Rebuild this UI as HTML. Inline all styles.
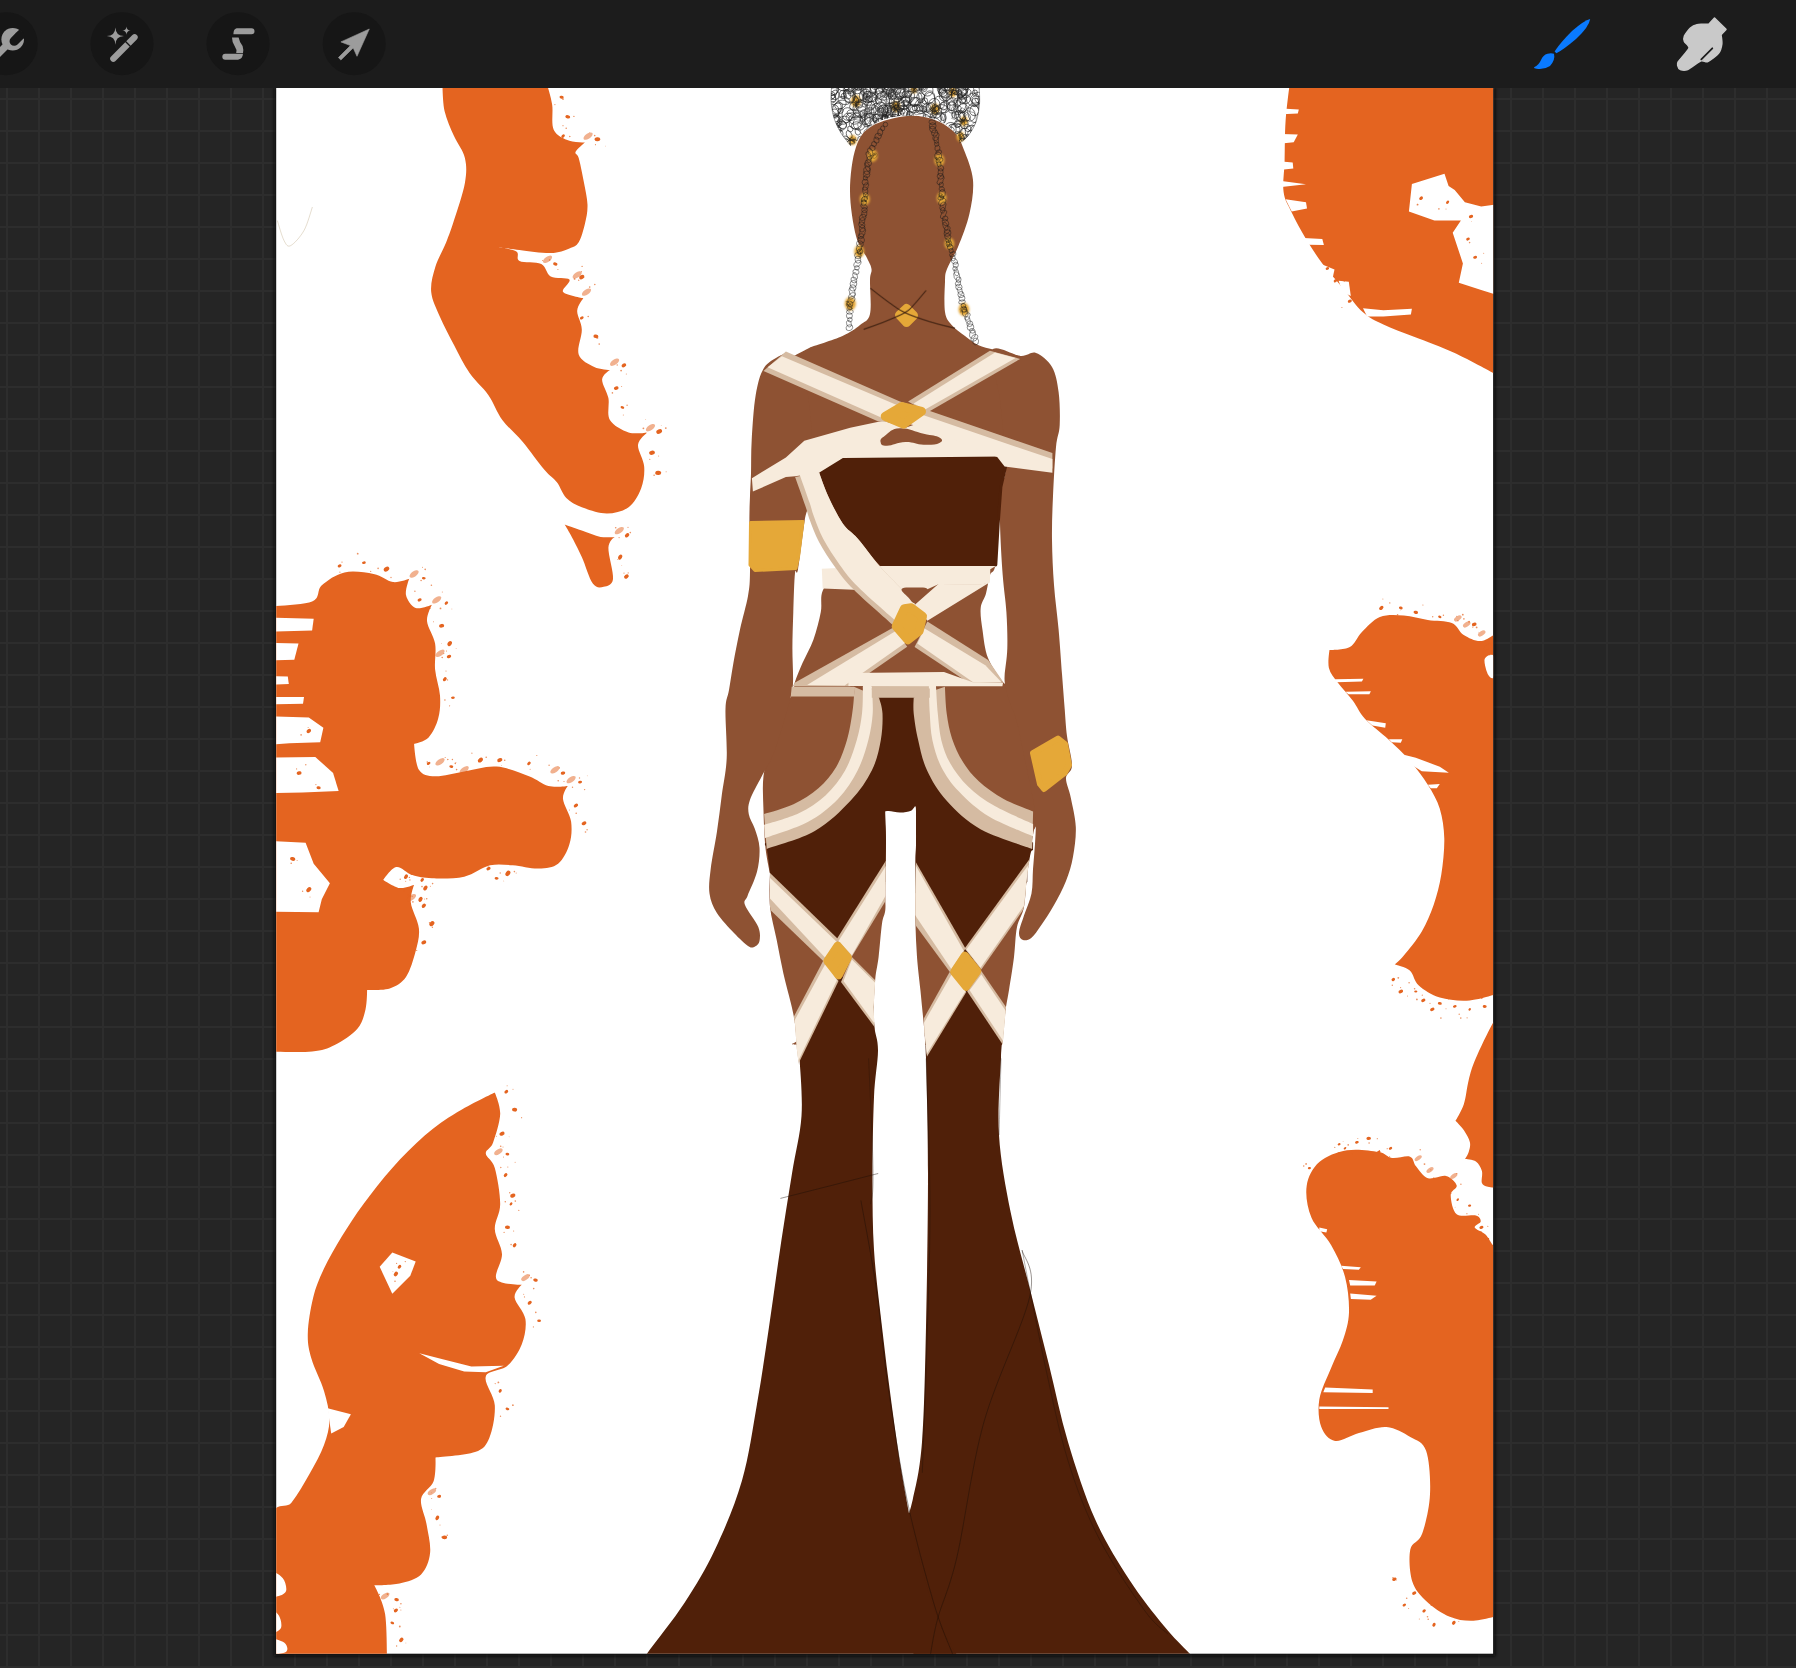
<!DOCTYPE html>
<html><head><meta charset="utf-8"><title>Procreate canvas</title>
<style>
html,body{margin:0;padding:0;background:#252525;overflow:hidden;font-family:"Liberation Sans",sans-serif}
svg{display:block}
</style></head><body>
<svg width="1796" height="1668" viewBox="0 0 1796 1668">
<defs>
<pattern id="grid" x="6" y="98" width="32" height="32" patternUnits="userSpaceOnUse">
<rect width="32" height="32" fill="#252525"/>
<rect x="0" y="0" width="2" height="32" fill="#2d2d2d"/>
<rect x="0" y="0" width="32" height="2" fill="#2d2d2d"/>
</pattern>
<clipPath id="cv"><rect x="276.2" y="88" width="1216.9" height="1565.7"/></clipPath>
<filter id="sh" x="-5%" y="-5%" width="110%" height="110%"><feGaussianBlur stdDeviation="1.8"/></filter>
</defs>
<rect width="1796" height="1668" fill="url(#grid)"/>
<rect x="274" y="88" width="1221.5" height="1568.5" fill="#0c0c0c" opacity="0.8" filter="url(#sh)"/>
<rect x="276.2" y="88" width="1216.9" height="1565.7" fill="#fff"/>
<g clip-path="url(#cv)">
<g id="orange"><path d="M442.5 86.2C442.5 86.2 442.7 102.9 444.6 111.2C446.6 119.5 450.6 128.3 454 136.1C457.4 143.9 463.1 150.2 464.9 158C466.7 165.8 466.7 172.5 464.9 182.9C463.1 193.3 457.1 210.5 454 220.3C450.9 230.2 449.3 234.4 446.2 242.2C443.1 250 437.8 258.8 435.3 267.1C432.8 275.4 430.4 283.7 431.2 292.1C432 300.4 436.2 308.2 440 317C443.8 325.8 449.1 335.7 454 345.1C458.9 354.4 463.9 364.8 469.6 373.1C475.3 381.5 482.8 387.2 488.3 395C493.8 402.8 496.6 412.1 502.3 419.9C508 427.7 515.6 433.4 522.6 441.7C529.6 450.1 538.7 463.1 544.4 469.8C550.1 476.6 553.3 477.6 556.9 482.3C560.5 487 562.1 493.7 566.3 497.9C570.4 502 575.1 504.6 581.8 507.2C588.6 509.8 599 513.5 606.8 513.5C614.6 513.5 622.9 511.4 628.6 507.2C634.3 503.1 638.5 495.3 641.1 488.5C643.7 481.8 644.7 474 644.2 466.7C643.7 459.4 637.5 450.6 638 444.9C638.5 439.1 647.3 432.4 647.3 432.4C647.3 432.4 634.9 434.5 628.6 432.4C622.4 430.3 613.3 425.6 609.9 419.9C606.5 414.2 609.7 404.8 608.4 398.1C607.1 391.3 601.9 384.1 602.1 379.4C602.4 374.7 609.9 370 609.9 370C609.9 370 599.5 369.5 594.3 366.9C589.1 364.3 580.8 360.7 578.7 354.4C576.6 348.2 582.1 336.8 581.8 329.5C581.6 322.2 576.9 316 577.2 310.8C577.4 305.6 583.4 298.3 583.4 298.3C583.4 298.3 565.5 295.2 563.1 292.1C560.8 288.9 571.5 282.2 569.4 279.6C567.3 277 555.3 279.1 550.7 276.5C546 273.9 546.5 266.6 541.3 264C536.1 261.4 523.6 263 519.5 260.9C515.3 258.8 520 253.9 516.4 251.5C512.7 249.2 497.6 246.8 497.6 246.8C497.6 246.8 510.6 248.9 519.5 250C528.3 251 542.3 253.3 550.7 253.1C559 252.8 564.7 250.2 569.4 248.4C574.1 246.6 576.1 246.3 578.7 242.2C581.3 238 583.5 229.7 585 223.4C586.4 217.2 587.7 212 587.5 204.7C587.2 197.5 584.9 187.6 583.4 179.8C582 172 580 162.6 578.7 158C577.4 153.3 574.6 154.3 575.6 151.7C576.6 149.1 585 142.4 585 142.4C585 142.4 574.6 142.9 569.4 140.8C564.2 138.7 556.6 135.9 553.8 129.9C550.9 123.9 553.3 112.2 552.2 104.9C551.2 97.7 547.5 86.2 547.5 86.2C547.5 86.2 442.5 86.2 442.5 86.2Z" fill="#E46420"/><path d="M564.7 524.4C564.7 524.4 575.9 528.5 581.8 530.6C587.8 532.7 595.1 535.8 600.6 536.9C606 537.9 614.6 536.9 614.6 536.9C614.6 536.9 608.6 540.8 608.4 547.8C608.1 554.8 613.8 572.5 613 579C612.3 585.5 607.1 586 603.7 586.8C600.3 587.5 596.4 588.6 592.8 583.6C589.1 578.7 585.5 565.2 581.8 557.1C578.2 549.1 573.8 540.8 570.9 535.3C568.1 529.8 564.7 524.4 564.7 524.4Z" fill="#E46420"/><path d="M270 606.4C270 606.4 303.5 605 312.1 601.5C320.7 598 316.4 590.2 321.8 585.3C327.2 580.5 335.8 574.3 344.5 572.4C353.1 570.5 365.5 572.4 373.6 574C381.7 575.6 387.1 581.3 393 582.1C399 582.9 409.2 578.8 409.2 578.8C409.2 578.8 404.9 590.2 406 595C407 599.9 411.4 606.4 415.7 608C420 609.6 431.9 604.7 431.9 604.7C431.9 604.7 426.5 614.5 427 620.9C427.5 627.4 433.8 635.5 435.1 643.6C436.5 651.7 434.3 660.9 435.1 669.5C435.9 678.1 439.4 687.3 440 695.4C440.5 703.5 440.2 711 438.3 718.1C436.5 725.1 432.7 733.2 428.6 737.5C424.6 741.8 414.1 743.9 414.1 743.9C414.1 743.9 415.4 764.5 418.9 769.8C422.4 775.2 427.5 776.1 435.1 776.3C442.7 776.6 454 773.1 464.2 771.5C474.5 769.8 485.8 765.8 496.6 766.6C507.4 767.4 520.4 773.1 529 776.3C537.6 779.6 541.9 784.4 548.4 786C554.9 787.7 567.8 786 567.8 786C567.8 786 562.4 793 563 799C563.5 804.9 570 814.1 571.1 821.6C572.1 829.2 571.6 837.3 569.4 844.3C567.3 851.3 563.2 859.7 558.1 863.7C553 867.8 546.2 868.3 538.7 868.6C531.1 868.9 520.9 865.9 512.8 865.3C504.7 864.8 498.2 863.5 490.1 865.3C482 867.2 473.9 874.5 464.2 876.7C454.5 878.8 440.5 878.6 431.9 878.3C423.2 878 418.4 876.9 412.4 875.1C406.5 873.2 401.1 866.2 396.3 867C391.4 867.8 383.3 879.9 383.3 879.9C383.3 879.9 394.4 887.2 399.5 888C404.6 888.8 414.1 884.8 414.1 884.8C414.1 884.8 410 895.3 410.8 902.6C411.6 909.9 418.1 920.4 418.9 928.5C419.7 936.6 417.8 943 415.7 951.1C413.5 959.2 410.3 970.8 406 977C401.6 983.2 396.3 986.2 389.8 988.4C383.3 990.5 367.1 990 367.1 990C367.1 990 367.1 1002.9 365.5 1009.4C363.9 1015.9 362.5 1022.9 357.4 1028.8C352.3 1034.8 342.3 1041.2 334.7 1045C327.2 1048.8 322.9 1050.4 312.1 1051.5C301.3 1052.6 270 1051.5 270 1051.5C270 1051.5 270 606.4 270 606.4Z" fill="#E46420"/><path d="M270 617.7L313.7 618.7L312.1 630.6L270 631.6Z" fill="#fff"/><path d="M270 642.9L298.5 643.6L294.3 659.8L270 660.4Z" fill="#fff"/><path d="M270 676L287.8 676.6L288.8 684.1L270 684.7Z" fill="#fff"/><path d="M270 697L304 697L303 703.8L270 704.5Z" fill="#fff"/><path d="M270 716.4L308.8 717.4L323.4 727.8L320.2 742.3L289.4 743.3L270 744.6Z" fill="#fff"/><path d="M270 757.5L315.3 756.9L333.1 773.1L338.6 790.9L302.4 792.5L270 793.2Z" fill="#fff"/><path d="M270 841.1L305.6 842.7L313.7 863.7L329.9 883.2L321.8 899.3L318.6 912.3L270 911.6Z" fill="#fff"/><path d="M494.8 1092.4C494.8 1092.4 500.5 1105.6 500.2 1114C499.9 1122.4 495.4 1136.1 493 1142.7C490.6 1149.3 485.5 1149.3 485.8 1153.5C486.1 1157.7 492.4 1159.5 494.8 1167.9C497.2 1176.3 500.2 1193.7 500.2 1203.9C500.2 1214.1 494.5 1220.7 494.8 1229.1C495.1 1237.5 501.7 1245.9 502 1254.2C502.3 1262.6 493.3 1274.3 496.6 1279.4C499.9 1284.5 521.8 1284.8 521.8 1284.8C521.8 1284.8 514 1291.7 514.6 1297.4C515.2 1303.1 524.2 1311.2 525.4 1319C526.6 1326.8 524.8 1336.4 521.8 1344.2C518.8 1352 513.4 1360.4 507.4 1365.8C501.4 1371.2 487.9 1370 485.8 1376.5C483.7 1383.1 494.2 1395.1 494.8 1405.3C495.4 1415.5 492.7 1429.9 489.4 1437.7C486.1 1445.5 484 1448.8 475 1452.1C466 1455.4 435.5 1457.5 435.5 1457.5C435.5 1457.5 436.1 1474 433.7 1480.9C431.3 1487.8 422.3 1491.7 421.1 1498.8C419.9 1506 425 1515 426.5 1524C428 1533 431 1544.4 430.1 1552.8C429.2 1561.2 426.2 1569.3 421.1 1574.4C416 1579.5 407.3 1581.6 399.5 1583.4C391.7 1585.2 374.3 1585.2 374.3 1585.2C374.3 1585.2 383 1600.8 385.1 1614C387.2 1627.1 386.9 1664.3 386.9 1664.3C386.9 1664.3 270 1664.3 270 1664.3C270 1664.3 266.4 1551 270 1524C273.6 1497.1 285 1510.8 291.6 1502.4C298.2 1494.1 304.2 1483.3 309.6 1473.7C315 1464.1 320.7 1453.9 324 1444.9C327.3 1435.9 329.4 1428.7 329.4 1419.7C329.4 1410.7 327 1401.1 324 1390.9C321 1380.7 314.1 1368.2 311.4 1358.6C308.7 1349 307.5 1343.6 307.8 1333.4C308.1 1323.2 310.5 1308.2 313.2 1297.4C315.9 1286.6 319.2 1278.8 324 1268.6C328.8 1258.4 335.3 1247.1 341.9 1236.3C348.5 1225.5 355.1 1215.3 363.5 1203.9C371.9 1192.5 382.1 1179.3 392.3 1167.9C402.5 1156.5 413.9 1144.8 424.7 1135.5C435.5 1126.2 445.4 1119.4 457.1 1112.2C468.7 1105 494.8 1092.4 494.8 1092.4Z" fill="#E46420"/><path d="M392.3 1252.4L415.7 1261.4L410.3 1275.8L392.3 1293.8L379.7 1266.8Z" fill="#fff"/><path d="M419.3 1353.2L442.7 1359.3L471.4 1366.5L503.8 1365.8L485.8 1372.2L464.2 1371.5L439.1 1364Z" fill="#fff"/><path d="M327.6 1408.2L350.9 1414.3L343.7 1426.9L331.2 1433.4Z" fill="#fff"/><path d="M270 1572.6C272.1 1569.9 279.9 1575 282.6 1578C285.3 1581 286.8 1587.6 286.2 1590.6C285.6 1593.6 281.7 1595.4 279 1596C276.3 1596.6 271.5 1598.1 270 1594.2C268.5 1590.3 267.9 1575.3 270 1572.6Z" fill="#fff"/><path d="M270 1610.4C271.5 1607.7 277.2 1612.8 279 1615.8C280.8 1618.8 282.3 1625.6 280.8 1628.3C279.3 1631 271.8 1634.9 270 1631.9C268.2 1628.9 268.5 1613.1 270 1610.4Z" fill="#fff"/><path d="M270 1639.1C272.4 1637.3 281.7 1640.6 284.4 1642.7C287.1 1644.8 288.6 1649.9 286.2 1651.7C283.8 1653.5 272.7 1655.6 270 1653.5C267.3 1651.4 267.6 1640.9 270 1639.1Z" fill="#fff"/><path d="M1289.7 84.1C1289.7 84.1 1286.4 107.9 1285.6 120.8C1284.7 133.7 1284.9 149.6 1284.6 161.5C1284.2 173.4 1282.4 183.6 1283.6 192.1C1284.7 200.6 1288 204.7 1291.7 212.5C1295.4 220.3 1300.9 230.5 1306 239C1311.1 247.4 1316.2 255.3 1322.3 263.4C1328.4 271.6 1335.9 279.7 1342.7 287.9C1349.4 296 1356.2 306.2 1363 312.3C1369.8 318.4 1374.9 320.5 1383.4 324.5C1391.9 328.6 1402.1 332 1414 336.8C1425.9 341.5 1440.8 346.6 1454.7 353.1C1468.7 359.5 1497.5 375.5 1497.5 375.5C1497.5 375.5 1497.5 84.1 1497.5 84.1C1497.5 84.1 1289.7 84.1 1289.7 84.1Z" fill="#E46420"/><path d="M1411.9 183.9L1444.5 173.7L1448.6 186L1454.7 190L1464.9 202.3L1481.2 206.4L1497.5 204.3L1497.5 295L1481.2 289.9L1458.8 282.8L1462.9 263.4L1452.7 232.8L1460.9 220.6L1434.4 220.6L1408.9 211.4Z" fill="#fff"/><path d="M1363 308.2L1383.4 310.3L1411.9 308.7L1410.9 314.4L1383.4 316.4L1367.1 316.4Z" fill="#fff"/><path d="M1281.5 108.5L1298.8 109.5L1297.8 113.6L1281.5 114.2Z" fill="#fff"/><path d="M1281.5 134L1297.8 134.6L1293.7 142.2L1281.5 143.6Z" fill="#fff"/><path d="M1281.5 161.5L1292.7 162.5L1293.3 168.6L1281.5 169.7Z" fill="#fff"/><path d="M1281.5 180.9L1306 184.3L1281.5 187Z" fill="#fff"/><path d="M1285.6 199.2L1306 202.3L1307 208.4L1291.7 211.4Z" fill="#fff"/><path d="M1303.9 237.9L1322.3 239L1323.9 245.1L1308 244.7Z" fill="#fff"/><path d="M1322.3 264.4L1334.5 269.5L1332.5 278.7L1326.4 276.7Z" fill="#fff"/><path d="M1338.6 280.7L1348.8 281.8L1350.8 296L1342.7 291.9Z" fill="#fff"/><path d="M1499.7 630.4C1499.7 630.4 1487.7 640.1 1481.7 640.9C1475.7 641.6 1468.7 637.9 1463.7 634.9C1458.8 631.9 1457.8 625.4 1451.8 622.9C1445.8 620.4 1435.8 621.2 1427.8 619.9C1419.8 618.7 1411.8 615.9 1403.8 615.4C1395.8 614.9 1386.8 614.2 1379.9 616.9C1372.9 619.7 1366.9 626.9 1361.9 631.9C1356.9 636.9 1355.3 643.9 1349.9 646.9C1344.5 649.9 1329.5 649.9 1329.5 649.9C1329.5 649.9 1327.5 662.4 1328.9 667.9C1330.3 673.4 1333.9 677.4 1337.9 682.8C1341.9 688.3 1348.4 694.8 1352.9 700.8C1357.4 706.8 1358.9 712.3 1364.9 718.8C1370.9 725.3 1381.3 732.8 1388.8 739.8C1396.3 746.8 1403.3 753.3 1409.8 760.7C1416.3 768.2 1422.8 776.7 1427.8 784.7C1432.8 792.7 1437 799.7 1439.8 808.7C1442.5 817.7 1444 827.7 1444.3 838.7C1444.5 849.6 1443 863.6 1441.3 874.6C1439.5 885.6 1437 895.1 1433.8 904.6C1430.5 914.1 1426.8 923 1421.8 931.5C1416.8 940 1408.3 950 1403.8 955.5C1399.3 961 1394.8 964.5 1394.8 964.5C1394.8 964.5 1405.8 967 1409.8 970.5C1413.8 974 1413.8 981 1418.8 985.5C1423.8 990 1431.3 995 1439.8 997.5C1448.3 1000 1459.8 1001.2 1469.7 1000.4C1479.7 999.7 1499.7 993 1499.7 993C1499.7 993 1499.7 630.4 1499.7 630.4Z" fill="#E46420"/><path d="M1334.9 679.3L1363.4 678.7L1361.9 681.6L1336.4 682.2Z" fill="#fff"/><path d="M1345.4 691.8L1370.9 691.2L1369.4 694.2L1348.4 694.2Z" fill="#fff"/><path d="M1366.4 720.3L1385.8 723.3L1385.2 727.8L1372.4 725.4Z" fill="#fff"/><path d="M1388.8 739.2L1402.3 739.2L1400.8 742.8L1391.8 742.2Z" fill="#fff"/><path d="M1403.8 754.8L1415.8 757.8L1439.8 766.7L1448.8 772.7L1421.8 771.2L1409.8 763.7Z" fill="#fff"/><path d="M1427.8 784.7L1439.8 784.1L1436.8 788.3L1430.8 788.3Z" fill="#fff"/><path d="M1484.7 658.9C1485.7 655.9 1492.2 652.9 1493.7 655.9C1495.2 658.9 1494.7 673.9 1493.7 676.9C1492.7 679.9 1489.2 676.9 1487.7 673.9C1486.2 670.9 1483.7 661.9 1484.7 658.9Z" fill="#fff"/><path d="M1500 1015C1500 1015 1496.6 1016.4 1492.5 1023.7C1488.4 1031 1479.5 1049.6 1475.5 1059C1471.5 1068.4 1470.6 1072.5 1468.7 1080C1466.8 1087.5 1466.1 1097.2 1463.9 1104C1461.7 1110.8 1455.5 1120.8 1455.5 1120.8C1455.5 1120.8 1461.5 1126.7 1463.9 1130.3C1466.3 1133.9 1469.1 1138.7 1469.9 1142.3C1470.7 1145.9 1469.5 1149.2 1468.7 1152C1467.9 1154.8 1465.1 1159 1465.1 1159C1465.1 1159 1473.1 1159.5 1475.9 1161.5C1478.7 1163.5 1480.9 1167.4 1481.9 1171C1482.9 1174.6 1480.9 1180.4 1481.9 1183C1482.9 1185.6 1484.9 1185.9 1487.9 1186.7C1490.9 1187.5 1500 1188 1500 1188C1500 1188 1500 1246 1500 1246C1500 1246 1495.7 1247.3 1493.3 1245.4C1490.9 1243.5 1488.6 1237.6 1485.5 1234.6C1482.4 1231.6 1475.5 1229.7 1474.7 1227.5C1473.9 1225.3 1480.5 1223.5 1480.7 1221.5C1480.9 1219.5 1479.9 1216.7 1475.9 1215.5C1471.9 1214.3 1460.9 1217.7 1456.7 1214.3C1452.5 1210.9 1450.7 1199.8 1450.7 1195C1450.7 1190.2 1457.5 1188.7 1456.7 1185.5C1455.9 1182.3 1450.8 1177.2 1446 1176C1441.2 1174.8 1433 1179.9 1428 1178.3C1423 1176.7 1419 1169.9 1416 1166.3C1413 1162.7 1414 1158.1 1410 1156.7C1406 1155.3 1397.2 1158.8 1392 1158C1386.8 1157.2 1386.1 1153.3 1378.6 1152C1371.1 1150.7 1356.9 1148.6 1347 1150.3C1337.1 1151.9 1326 1156.2 1319.3 1162.1C1312.6 1168.1 1308 1176.6 1306.7 1185.8C1305.3 1195.1 1307.3 1207.6 1311.4 1217.5C1315.5 1227.4 1325.6 1235.3 1331.2 1245.2C1336.8 1255 1342 1265.6 1345 1276.8C1348 1288 1349.3 1301.8 1349 1312.4C1348.6 1322.9 1346 1330.8 1343 1340.1C1340.1 1349.3 1335.1 1357.8 1331.2 1367.7C1327.2 1377.6 1321 1389.5 1319.3 1399.4C1317.7 1409.3 1318.7 1420.1 1321.3 1427C1323.9 1434 1328.9 1439.9 1335.1 1440.9C1341.4 1441.9 1350.3 1435.3 1358.9 1433C1367.4 1430.7 1378 1426.4 1386.5 1427C1395.1 1427.7 1403.7 1433 1410.3 1436.9C1416.8 1440.9 1422.8 1441.2 1426.1 1450.8C1429.4 1460.3 1430.7 1480.4 1430 1494.3C1429.4 1508.1 1425.4 1524.6 1422.1 1533.8C1418.8 1543 1411.9 1541.7 1410.3 1549.6C1408.6 1557.5 1409.6 1572.7 1412.2 1581.3C1414.9 1589.8 1419.8 1595.1 1426.1 1601C1432.3 1607 1441.9 1613.5 1449.8 1616.8C1457.7 1620.1 1465 1621.1 1473.5 1620.8C1482.1 1620.5 1501.2 1614.9 1501.2 1614.9C1501.2 1614.9 1500 1015 1500 1015Z" fill="#E46420"/><path d="M1349 1280L1376.6 1281.5L1374.7 1285.5L1350.2 1285.5Z" fill="#fff"/><path d="M1350.2 1293.4L1376.6 1295.8L1370.7 1299.7L1350.9 1298.9Z" fill="#fff"/><path d="M1341.1 1265.7L1360.8 1267.3L1358.9 1269.7L1343 1268.9Z" fill="#fff"/><path d="M1325.2 1387.5L1372.7 1389.5L1372.7 1393L1323.3 1392.2Z" fill="#fff"/><path d="M1319.3 1406.5L1388.5 1407.3L1388.5 1408.9L1319.3 1408.9Z" fill="#fff"/><path d="M1319.3 1227.4L1327.2 1229.3L1326.4 1232.5L1319.3 1231.3Z" fill="#fff"/><ellipse cx="561.6" cy="97.2" rx="2.1" ry="1.5" fill="#E46420" transform="rotate(9 561.6 97.2)"/><circle cx="554.9" cy="104.6" r="0.6" fill="#E46420" opacity="0.7"/><circle cx="563" cy="99.1" r="0.9" fill="#E46420" opacity="0.7"/><ellipse cx="567.8" cy="116.8" rx="2.4" ry="1.7" fill="#E46420" transform="rotate(10 567.8 116.8)"/><circle cx="563" cy="125.7" r="0.6" fill="#E46420" opacity="0.7"/><circle cx="573.9" cy="116.4" r="0.7" fill="#E46420" opacity="0.7"/><ellipse cx="563.1" cy="136.1" rx="2" ry="1.4" fill="#E46420" transform="rotate(-41 563.1 136.1)"/><circle cx="569.8" cy="136.5" r="0.8" fill="#E46420" opacity="0.7"/><circle cx="566.2" cy="128.3" r="0.8" fill="#E46420" opacity="0.7"/><ellipse cx="588.1" cy="136.1" rx="5.3" ry="2.6" fill="#E46420" opacity="0.5" transform="rotate(-35 588.1 136.1)"/><circle cx="589.7" cy="132.6" r="0.4" fill="#E46420" opacity="0.7"/><circle cx="594.7" cy="135.6" r="0.8" fill="#E46420" opacity="0.7"/><ellipse cx="597.4" cy="139.3" rx="2.9" ry="2" fill="#E46420" transform="rotate(-6 597.4 139.3)"/><circle cx="595.5" cy="144.7" r="0.6" fill="#E46420" opacity="0.7"/><circle cx="605.3" cy="146.1" r="0.4" fill="#E46420" opacity="0.7"/><ellipse cx="581.8" cy="317.9" rx="2" ry="1.4" fill="#E46420" transform="rotate(-33 581.8 317.9)"/><circle cx="577.5" cy="321" r="0.8" fill="#E46420" opacity="0.7"/><circle cx="588.2" cy="316.5" r="0.8" fill="#E46420" opacity="0.7"/><ellipse cx="595.9" cy="336.3" rx="2.5" ry="1.8" fill="#E46420" transform="rotate(8 595.9 336.3)"/><circle cx="597.4" cy="337.9" r="0.9" fill="#E46420" opacity="0.7"/><circle cx="599.2" cy="344.1" r="0.8" fill="#E46420" opacity="0.7"/><ellipse cx="614.6" cy="362.2" rx="5.3" ry="2.6" fill="#E46420" opacity="0.5" transform="rotate(-35 614.6 362.2)"/><circle cx="623.4" cy="365.3" r="0.5" fill="#E46420" opacity="0.7"/><circle cx="621.1" cy="370.6" r="0.9" fill="#E46420" opacity="0.7"/><ellipse cx="623.9" cy="365.3" rx="2.5" ry="1.8" fill="#E46420" transform="rotate(-33 623.9 365.3)"/><circle cx="626.3" cy="374.1" r="0.5" fill="#E46420" opacity="0.7"/><circle cx="617.2" cy="365" r="0.7" fill="#E46420" opacity="0.7"/><ellipse cx="616.2" cy="388.1" rx="2.4" ry="1.7" fill="#E46420" transform="rotate(-16 616.2 388.1)"/><circle cx="621.6" cy="386.5" r="0.5" fill="#E46420" opacity="0.7"/><circle cx="612.4" cy="392.9" r="0.8" fill="#E46420" opacity="0.7"/><ellipse cx="622.4" cy="407.4" rx="1.9" ry="1.3" fill="#E46420" transform="rotate(18 622.4 407.4)"/><circle cx="627.1" cy="405.2" r="0.7" fill="#E46420" opacity="0.7"/><circle cx="623.3" cy="415" r="0.5" fill="#E46420" opacity="0.7"/><ellipse cx="650.5" cy="427.7" rx="5.3" ry="2.6" fill="#E46420" opacity="0.5" transform="rotate(-35 650.5 427.7)"/><circle cx="645.7" cy="419.4" r="0.4" fill="#E46420" opacity="0.7"/><circle cx="643.4" cy="428.3" r="0.9" fill="#E46420" opacity="0.7"/><ellipse cx="659.2" cy="431.5" rx="3" ry="2.1" fill="#E46420" transform="rotate(-23 659.2 431.5)"/><circle cx="661.2" cy="425.3" r="0.4" fill="#E46420" opacity="0.7"/><circle cx="665.8" cy="428.1" r="0.9" fill="#E46420" opacity="0.7"/><ellipse cx="652" cy="452.7" rx="2.9" ry="2.1" fill="#E46420" transform="rotate(-12 652 452.7)"/><circle cx="649.8" cy="459.3" r="0.6" fill="#E46420" opacity="0.7"/><circle cx="658.6" cy="455.9" r="0.5" fill="#E46420" opacity="0.7"/><ellipse cx="658.2" cy="472.9" rx="3" ry="2.1" fill="#E46420" transform="rotate(4 658.2 472.9)"/><circle cx="654.1" cy="475.3" r="0.8" fill="#E46420" opacity="0.7"/><circle cx="666.1" cy="471.8" r="0.5" fill="#E46420" opacity="0.7"/><ellipse cx="619.3" cy="530.6" rx="5.3" ry="2.6" fill="#E46420" opacity="0.5" transform="rotate(-35 619.3 530.6)"/><circle cx="615.7" cy="527.7" r="0.8" fill="#E46420" opacity="0.7"/><circle cx="628" cy="527.3" r="0.6" fill="#E46420" opacity="0.7"/><ellipse cx="627.1" cy="535.3" rx="2.5" ry="1.8" fill="#E46420" transform="rotate(-43 627.1 535.3)"/><circle cx="619.1" cy="537.6" r="0.6" fill="#E46420" opacity="0.7"/><circle cx="630.3" cy="532.6" r="0.8" fill="#E46420" opacity="0.7"/><ellipse cx="620.2" cy="557.1" rx="2.7" ry="1.9" fill="#E46420" transform="rotate(-58 620.2 557.1)"/><circle cx="621.8" cy="565.3" r="0.4" fill="#E46420" opacity="0.7"/><circle cx="617.8" cy="559.4" r="0.5" fill="#E46420" opacity="0.7"/><ellipse cx="626.4" cy="576.5" rx="2.6" ry="1.8" fill="#E46420" transform="rotate(-38 626.4 576.5)"/><circle cx="624" cy="573.1" r="0.6" fill="#E46420" opacity="0.7"/><circle cx="628.2" cy="572.9" r="0.6" fill="#E46420" opacity="0.7"/><ellipse cx="577.2" cy="274.9" rx="5.3" ry="2.6" fill="#E46420" opacity="0.5" transform="rotate(-35 577.2 274.9)"/><circle cx="582.1" cy="266.4" r="0.7" fill="#E46420" opacity="0.7"/><circle cx="581.4" cy="271.5" r="0.5" fill="#E46420" opacity="0.7"/><ellipse cx="581.8" cy="277.1" rx="2.8" ry="2" fill="#E46420" transform="rotate(-30 581.8 277.1)"/><circle cx="578.7" cy="280.3" r="0.7" fill="#E46420" opacity="0.7"/><circle cx="574.6" cy="278.9" r="0.9" fill="#E46420" opacity="0.7"/><ellipse cx="586.5" cy="292.1" rx="5.3" ry="2.6" fill="#E46420" opacity="0.5" transform="rotate(-35 586.5 292.1)"/><circle cx="589.7" cy="287.1" r="0.8" fill="#E46420" opacity="0.7"/><circle cx="594.8" cy="284.5" r="0.8" fill="#E46420" opacity="0.7"/><ellipse cx="547.5" cy="259.3" rx="5.3" ry="2.6" fill="#E46420" opacity="0.5" transform="rotate(-35 547.5 259.3)"/><circle cx="542.5" cy="260.5" r="0.5" fill="#E46420" opacity="0.7"/><circle cx="552.7" cy="250.9" r="0.9" fill="#E46420" opacity="0.7"/><ellipse cx="555.3" cy="264" rx="2.2" ry="1.6" fill="#E46420" transform="rotate(13 555.3 264)"/><circle cx="549.6" cy="260" r="0.8" fill="#E46420" opacity="0.7"/><circle cx="557.9" cy="269.5" r="0.6" fill="#E46420" opacity="0.7"/><ellipse cx="339.6" cy="565.9" rx="2" ry="1.4" fill="#E46420" transform="rotate(-23 339.6 565.9)"/><circle cx="339.9" cy="572.2" r="0.6" fill="#E46420" opacity="0.7"/><circle cx="342" cy="562.1" r="0.7" fill="#E46420" opacity="0.7"/><ellipse cx="363.9" cy="562.7" rx="1.9" ry="1.3" fill="#E46420" transform="rotate(-8 363.9 562.7)"/><circle cx="357.7" cy="553.7" r="0.9" fill="#E46420" opacity="0.7"/><circle cx="370.7" cy="571.4" r="0.6" fill="#E46420" opacity="0.7"/><ellipse cx="386.5" cy="569.1" rx="3" ry="2.1" fill="#E46420" transform="rotate(-32 386.5 569.1)"/><circle cx="378.1" cy="568.4" r="0.8" fill="#E46420" opacity="0.7"/><circle cx="391" cy="577.5" r="0.7" fill="#E46420" opacity="0.7"/><ellipse cx="414.1" cy="574" rx="5.3" ry="2.6" fill="#E46420" opacity="0.5" transform="rotate(-35 414.1 574)"/><circle cx="421.1" cy="580.5" r="0.8" fill="#E46420" opacity="0.7"/><circle cx="422.5" cy="567.2" r="0.5" fill="#E46420" opacity="0.7"/><ellipse cx="423.8" cy="578.2" rx="1.9" ry="1.3" fill="#E46420" transform="rotate(5 423.8 578.2)"/><circle cx="431.4" cy="585.3" r="0.8" fill="#E46420" opacity="0.7"/><circle cx="425.2" cy="569.4" r="0.8" fill="#E46420" opacity="0.7"/><ellipse cx="419.6" cy="599.9" rx="2.1" ry="1.5" fill="#E46420" transform="rotate(-22 419.6 599.9)"/><circle cx="414.9" cy="591.2" r="0.7" fill="#E46420" opacity="0.7"/><circle cx="411.5" cy="607.3" r="0.5" fill="#E46420" opacity="0.7"/><ellipse cx="436.7" cy="599.9" rx="5.3" ry="2.6" fill="#E46420" opacity="0.5" transform="rotate(-35 436.7 599.9)"/><circle cx="430" cy="608.4" r="0.7" fill="#E46420" opacity="0.7"/><circle cx="442.3" cy="592" r="0.5" fill="#E46420" opacity="0.7"/><ellipse cx="446.4" cy="603.1" rx="2" ry="1.4" fill="#E46420" transform="rotate(-45 446.4 603.1)"/><circle cx="440.5" cy="608.4" r="0.9" fill="#E46420" opacity="0.7"/><circle cx="451.9" cy="609" r="0.4" fill="#E46420" opacity="0.7"/><ellipse cx="441.6" cy="625.8" rx="2.6" ry="1.8" fill="#E46420" transform="rotate(-9 441.6 625.8)"/><circle cx="433.5" cy="621.7" r="0.5" fill="#E46420" opacity="0.7"/><circle cx="442.1" cy="624.4" r="0.6" fill="#E46420" opacity="0.7"/><ellipse cx="449.7" cy="643.6" rx="2.8" ry="2" fill="#E46420" transform="rotate(-60 449.7 643.6)"/><circle cx="456.1" cy="648.5" r="0.4" fill="#E46420" opacity="0.7"/><circle cx="441.6" cy="643.3" r="0.4" fill="#E46420" opacity="0.7"/><ellipse cx="440" cy="653.3" rx="5.3" ry="2.6" fill="#E46420" opacity="0.5" transform="rotate(-35 440 653.3)"/><circle cx="443.8" cy="653.6" r="0.6" fill="#E46420" opacity="0.7"/><circle cx="433.8" cy="645.6" r="0.6" fill="#E46420" opacity="0.7"/><ellipse cx="449" cy="656.5" rx="2.3" ry="1.6" fill="#E46420" transform="rotate(-22 449 656.5)"/><circle cx="446.5" cy="651" r="0.6" fill="#E46420" opacity="0.7"/><circle cx="442.2" cy="657.5" r="0.8" fill="#E46420" opacity="0.7"/><ellipse cx="444.8" cy="679.2" rx="2.3" ry="1.6" fill="#E46420" transform="rotate(-50 444.8 679.2)"/><circle cx="446" cy="671" r="0.6" fill="#E46420" opacity="0.7"/><circle cx="447.5" cy="679.9" r="0.7" fill="#E46420" opacity="0.7"/><ellipse cx="452.9" cy="697.7" rx="1.9" ry="1.3" fill="#E46420" transform="rotate(-5 452.9 697.7)"/><circle cx="444.9" cy="700" r="0.8" fill="#E46420" opacity="0.7"/><circle cx="449.6" cy="705.8" r="0.6" fill="#E46420" opacity="0.7"/><ellipse cx="428.6" cy="763.4" rx="1.9" ry="1.3" fill="#E46420" transform="rotate(-33 428.6 763.4)"/><circle cx="429.3" cy="766.9" r="0.4" fill="#E46420" opacity="0.7"/><circle cx="427.3" cy="762" r="0.8" fill="#E46420" opacity="0.7"/><ellipse cx="440" cy="761.8" rx="5.3" ry="2.6" fill="#E46420" opacity="0.5" transform="rotate(-35 440 761.8)"/><circle cx="447.8" cy="759.5" r="0.8" fill="#E46420" opacity="0.7"/><circle cx="445.2" cy="757.5" r="0.6" fill="#E46420" opacity="0.7"/><ellipse cx="451.3" cy="766.6" rx="2" ry="1.4" fill="#E46420" transform="rotate(7 451.3 766.6)"/><circle cx="456.6" cy="769.6" r="0.8" fill="#E46420" opacity="0.7"/><circle cx="452.4" cy="759.5" r="0.7" fill="#E46420" opacity="0.7"/><ellipse cx="464.2" cy="769.8" rx="5.3" ry="2.6" fill="#E46420" opacity="0.5" transform="rotate(-35 464.2 769.8)"/><circle cx="455.3" cy="763.4" r="0.8" fill="#E46420" opacity="0.7"/><circle cx="456" cy="762.5" r="0.4" fill="#E46420" opacity="0.7"/><ellipse cx="480.4" cy="760.1" rx="2.9" ry="2" fill="#E46420" transform="rotate(-38 480.4 760.1)"/><circle cx="486.2" cy="757.3" r="0.8" fill="#E46420" opacity="0.7"/><circle cx="471.9" cy="753.2" r="0.6" fill="#E46420" opacity="0.7"/><ellipse cx="499.8" cy="760.1" rx="2.7" ry="1.9" fill="#E46420" transform="rotate(-24 499.8 760.1)"/><circle cx="501.3" cy="765.5" r="0.4" fill="#E46420" opacity="0.7"/><circle cx="504.7" cy="760.3" r="0.8" fill="#E46420" opacity="0.7"/><ellipse cx="529" cy="763.4" rx="2" ry="1.4" fill="#E46420" transform="rotate(-48 529 763.4)"/><circle cx="536.8" cy="755.5" r="0.6" fill="#E46420" opacity="0.7"/><circle cx="530.1" cy="769.3" r="0.5" fill="#E46420" opacity="0.7"/><ellipse cx="554.9" cy="769.8" rx="5.3" ry="2.6" fill="#E46420" opacity="0.5" transform="rotate(-35 554.9 769.8)"/><circle cx="549.1" cy="765.3" r="0.7" fill="#E46420" opacity="0.7"/><circle cx="559.4" cy="767.9" r="0.6" fill="#E46420" opacity="0.7"/><ellipse cx="563" cy="773.1" rx="2.3" ry="1.6" fill="#E46420" transform="rotate(-16 563 773.1)"/><circle cx="564" cy="781.5" r="0.6" fill="#E46420" opacity="0.7"/><circle cx="558.2" cy="780.8" r="0.8" fill="#E46420" opacity="0.7"/><ellipse cx="571.1" cy="779.6" rx="5.3" ry="2.6" fill="#E46420" opacity="0.5" transform="rotate(-35 571.1 779.6)"/><circle cx="579.5" cy="778" r="0.7" fill="#E46420" opacity="0.7"/><circle cx="572.5" cy="787.2" r="0.7" fill="#E46420" opacity="0.7"/><ellipse cx="580.1" cy="782.1" rx="2" ry="1.4" fill="#E46420" transform="rotate(-9 580.1 782.1)"/><circle cx="587.3" cy="775.8" r="0.4" fill="#E46420" opacity="0.7"/><circle cx="584.6" cy="789.6" r="0.7" fill="#E46420" opacity="0.7"/><ellipse cx="575.9" cy="805.5" rx="2.4" ry="1.7" fill="#E46420" transform="rotate(-37 575.9 805.5)"/><circle cx="569.4" cy="810" r="0.5" fill="#E46420" opacity="0.7"/><circle cx="576.2" cy="813.3" r="0.8" fill="#E46420" opacity="0.7"/><ellipse cx="584" cy="823.3" rx="2.5" ry="1.8" fill="#E46420" transform="rotate(-23 584 823.3)"/><circle cx="587.1" cy="829.7" r="0.7" fill="#E46420" opacity="0.7"/><circle cx="585.5" cy="832" r="0.8" fill="#E46420" opacity="0.7"/><ellipse cx="488.5" cy="868.6" rx="2.2" ry="1.6" fill="#E46420" transform="rotate(-26 488.5 868.6)"/><circle cx="488.1" cy="866.5" r="0.5" fill="#E46420" opacity="0.7"/><circle cx="486" cy="865.4" r="0.8" fill="#E46420" opacity="0.7"/><ellipse cx="496.6" cy="878.3" rx="2" ry="1.4" fill="#E46420" transform="rotate(1 496.6 878.3)"/><circle cx="500.2" cy="873" r="0.7" fill="#E46420" opacity="0.7"/><circle cx="503.8" cy="881" r="0.4" fill="#E46420" opacity="0.7"/><ellipse cx="507.9" cy="873.4" rx="3" ry="2.1" fill="#E46420" transform="rotate(-51 507.9 873.4)"/><circle cx="514.4" cy="871.6" r="0.8" fill="#E46420" opacity="0.7"/><circle cx="516.2" cy="872.9" r="0.5" fill="#E46420" opacity="0.7"/><ellipse cx="422.2" cy="879.9" rx="2.1" ry="1.5" fill="#E46420" transform="rotate(-52 422.2 879.9)"/><circle cx="430.4" cy="886.3" r="0.5" fill="#E46420" opacity="0.7"/><circle cx="416.6" cy="875.6" r="0.5" fill="#E46420" opacity="0.7"/><ellipse cx="425.4" cy="888" rx="2.7" ry="1.9" fill="#E46420" transform="rotate(-56 425.4 888)"/><circle cx="432.6" cy="883.6" r="0.8" fill="#E46420" opacity="0.7"/><circle cx="422" cy="886.6" r="0.8" fill="#E46420" opacity="0.7"/><ellipse cx="411.5" cy="897.7" rx="5.3" ry="2.6" fill="#E46420" opacity="0.5" transform="rotate(-35 411.5 897.7)"/><circle cx="404" cy="890.4" r="0.8" fill="#E46420" opacity="0.7"/><circle cx="407.7" cy="895.1" r="0.7" fill="#E46420" opacity="0.7"/><ellipse cx="420.5" cy="899.3" rx="2.7" ry="1.9" fill="#E46420" transform="rotate(-60 420.5 899.3)"/><circle cx="412.1" cy="896.3" r="0.6" fill="#E46420" opacity="0.7"/><circle cx="412.9" cy="901.9" r="0.8" fill="#E46420" opacity="0.7"/><ellipse cx="423.8" cy="905.8" rx="2.4" ry="1.7" fill="#E46420" transform="rotate(-44 423.8 905.8)"/><circle cx="424.6" cy="899" r="0.5" fill="#E46420" opacity="0.7"/><circle cx="426.7" cy="898.8" r="0.8" fill="#E46420" opacity="0.7"/><ellipse cx="431.9" cy="923.6" rx="2.9" ry="2.1" fill="#E46420" transform="rotate(-48 431.9 923.6)"/><circle cx="432.4" cy="927.2" r="0.7" fill="#E46420" opacity="0.7"/><circle cx="429.5" cy="922.7" r="0.7" fill="#E46420" opacity="0.7"/><ellipse cx="423.8" cy="942.4" rx="2.6" ry="1.9" fill="#E46420" transform="rotate(-27 423.8 942.4)"/><circle cx="416.7" cy="950.4" r="0.6" fill="#E46420" opacity="0.7"/><circle cx="425" cy="942.9" r="0.7" fill="#E46420" opacity="0.7"/><ellipse cx="406" cy="876.7" rx="2.5" ry="1.7" fill="#E46420" transform="rotate(-53 406 876.7)"/><circle cx="409.9" cy="879.9" r="0.7" fill="#E46420" opacity="0.7"/><circle cx="400.2" cy="879.3" r="0.7" fill="#E46420" opacity="0.7"/><ellipse cx="412.4" cy="873.4" rx="2.1" ry="1.5" fill="#E46420" transform="rotate(-2 412.4 873.4)"/><circle cx="405.7" cy="881.2" r="0.5" fill="#E46420" opacity="0.7"/><circle cx="409.4" cy="877.4" r="0.7" fill="#E46420" opacity="0.7"/><ellipse cx="308.8" cy="731" rx="2.5" ry="1.8" fill="#E46420" transform="rotate(-37 308.8 731)"/><circle cx="308.1" cy="727.6" r="0.5" fill="#E46420" opacity="0.7"/><circle cx="301.1" cy="734.9" r="0.8" fill="#E46420" opacity="0.7"/><ellipse cx="299.1" cy="773.1" rx="2.5" ry="1.8" fill="#E46420" transform="rotate(-10 299.1 773.1)"/><circle cx="296.6" cy="768.9" r="0.6" fill="#E46420" opacity="0.7"/><circle cx="305.8" cy="764.8" r="0.7" fill="#E46420" opacity="0.7"/><ellipse cx="318.6" cy="787.7" rx="2.1" ry="1.5" fill="#E46420" transform="rotate(5 318.6 787.7)"/><circle cx="315.9" cy="784.6" r="0.6" fill="#E46420" opacity="0.7"/><circle cx="319.3" cy="792.5" r="0.6" fill="#E46420" opacity="0.7"/><ellipse cx="308.8" cy="889.6" rx="2.9" ry="2" fill="#E46420" transform="rotate(-46 308.8 889.6)"/><circle cx="302.6" cy="891.2" r="0.7" fill="#E46420" opacity="0.7"/><circle cx="310" cy="897" r="0.5" fill="#E46420" opacity="0.7"/><ellipse cx="292.7" cy="858.9" rx="2.7" ry="1.9" fill="#E46420" transform="rotate(12 292.7 858.9)"/><circle cx="291.2" cy="863.3" r="0.8" fill="#E46420" opacity="0.7"/><circle cx="297.1" cy="860.5" r="0.5" fill="#E46420" opacity="0.7"/><ellipse cx="506.3" cy="1091.7" rx="2.1" ry="1.5" fill="#E46420" transform="rotate(-36 506.3 1091.7)"/><circle cx="507.1" cy="1085.7" r="0.5" fill="#E46420" opacity="0.7"/><circle cx="513" cy="1089.3" r="0.5" fill="#E46420" opacity="0.7"/><ellipse cx="514.6" cy="1109.6" rx="2.6" ry="1.8" fill="#E46420" transform="rotate(-4 514.6 1109.6)"/><circle cx="521.6" cy="1117.7" r="0.6" fill="#E46420" opacity="0.7"/><circle cx="515.6" cy="1111.1" r="0.7" fill="#E46420" opacity="0.7"/><ellipse cx="502" cy="1133.7" rx="2.7" ry="1.9" fill="#E46420" transform="rotate(-22 502 1133.7)"/><circle cx="509.1" cy="1136.8" r="0.4" fill="#E46420" opacity="0.7"/><circle cx="496.4" cy="1136.2" r="0.5" fill="#E46420" opacity="0.7"/><ellipse cx="498.4" cy="1151.7" rx="4.8" ry="2.4" fill="#E46420" opacity="0.5" transform="rotate(-35 498.4 1151.7)"/><circle cx="503" cy="1146.9" r="0.5" fill="#E46420" opacity="0.7"/><circle cx="500.7" cy="1146.3" r="0.8" fill="#E46420" opacity="0.7"/><ellipse cx="507.4" cy="1154.2" rx="1.9" ry="1.4" fill="#E46420" transform="rotate(4 507.4 1154.2)"/><circle cx="515.1" cy="1162.3" r="0.5" fill="#E46420" opacity="0.7"/><circle cx="503.5" cy="1157.1" r="0.5" fill="#E46420" opacity="0.7"/><ellipse cx="505.6" cy="1175.1" rx="2.2" ry="1.5" fill="#E46420" transform="rotate(-49 505.6 1175.1)"/><circle cx="507.8" cy="1167" r="0.6" fill="#E46420" opacity="0.7"/><circle cx="500.8" cy="1167.5" r="0.7" fill="#E46420" opacity="0.7"/><ellipse cx="512.8" cy="1195.6" rx="2.7" ry="1.9" fill="#E46420" transform="rotate(-19 512.8 1195.6)"/><circle cx="509.7" cy="1192.8" r="0.7" fill="#E46420" opacity="0.7"/><circle cx="505.3" cy="1201.7" r="0.8" fill="#E46420" opacity="0.7"/><ellipse cx="511" cy="1203.9" rx="1.7" ry="1.2" fill="#E46420" transform="rotate(-50 511 1203.9)"/><circle cx="515.3" cy="1201.1" r="0.8" fill="#E46420" opacity="0.7"/><circle cx="518.8" cy="1210.4" r="0.6" fill="#E46420" opacity="0.7"/><ellipse cx="507.4" cy="1227.3" rx="2.5" ry="1.8" fill="#E46420" transform="rotate(2 507.4 1227.3)"/><circle cx="504.1" cy="1232.4" r="0.6" fill="#E46420" opacity="0.7"/><circle cx="513.6" cy="1231" r="0.6" fill="#E46420" opacity="0.7"/><ellipse cx="514.6" cy="1245.3" rx="2.2" ry="1.6" fill="#E46420" transform="rotate(-52 514.6 1245.3)"/><circle cx="515.3" cy="1243.8" r="0.7" fill="#E46420" opacity="0.7"/><circle cx="511.1" cy="1244.6" r="0.8" fill="#E46420" opacity="0.7"/><ellipse cx="525.4" cy="1277.6" rx="4.8" ry="2.4" fill="#E46420" opacity="0.5" transform="rotate(-35 525.4 1277.6)"/><circle cx="523.6" cy="1271.9" r="0.8" fill="#E46420" opacity="0.7"/><circle cx="529.4" cy="1275.2" r="0.6" fill="#E46420" opacity="0.7"/><ellipse cx="535.5" cy="1280.1" rx="2.3" ry="1.6" fill="#E46420" transform="rotate(16 535.5 1280.1)"/><circle cx="533.7" cy="1288.6" r="0.8" fill="#E46420" opacity="0.7"/><circle cx="531.1" cy="1277.8" r="0.8" fill="#E46420" opacity="0.7"/><ellipse cx="529.7" cy="1302.8" rx="2.3" ry="1.6" fill="#E46420" transform="rotate(-40 529.7 1302.8)"/><circle cx="524.5" cy="1296.9" r="0.6" fill="#E46420" opacity="0.7"/><circle cx="523.7" cy="1294.3" r="0.5" fill="#E46420" opacity="0.7"/><ellipse cx="539.1" cy="1320.8" rx="1.9" ry="1.3" fill="#E46420" transform="rotate(2 539.1 1320.8)"/><circle cx="533.4" cy="1326.9" r="0.6" fill="#E46420" opacity="0.7"/><circle cx="535.8" cy="1312.4" r="0.8" fill="#E46420" opacity="0.7"/><ellipse cx="500.2" cy="1390.9" rx="1.9" ry="1.4" fill="#E46420" transform="rotate(-55 500.2 1390.9)"/><circle cx="498.4" cy="1382.4" r="0.9" fill="#E46420" opacity="0.7"/><circle cx="495.2" cy="1383.6" r="0.6" fill="#E46420" opacity="0.7"/><ellipse cx="507.4" cy="1408.9" rx="1.9" ry="1.3" fill="#E46420" transform="rotate(19 507.4 1408.9)"/><circle cx="500.5" cy="1416.3" r="0.7" fill="#E46420" opacity="0.7"/><circle cx="512.9" cy="1405.2" r="0.9" fill="#E46420" opacity="0.7"/><ellipse cx="431.9" cy="1491.7" rx="4.8" ry="2.4" fill="#E46420" opacity="0.5" transform="rotate(-35 431.9 1491.7)"/><circle cx="439.8" cy="1496.9" r="0.9" fill="#E46420" opacity="0.7"/><circle cx="431.7" cy="1492.8" r="0.4" fill="#E46420" opacity="0.7"/><ellipse cx="439.1" cy="1496.3" rx="2" ry="1.4" fill="#E46420" transform="rotate(-16 439.1 1496.3)"/><circle cx="435.8" cy="1488.4" r="0.6" fill="#E46420" opacity="0.7"/><circle cx="431.7" cy="1498.4" r="0.5" fill="#E46420" opacity="0.7"/><ellipse cx="437.3" cy="1517.9" rx="2.4" ry="1.7" fill="#E46420" transform="rotate(-58 437.3 1517.9)"/><circle cx="431.3" cy="1509.6" r="0.4" fill="#E46420" opacity="0.7"/><circle cx="440" cy="1525.1" r="0.5" fill="#E46420" opacity="0.7"/><ellipse cx="444.5" cy="1537.3" rx="2.7" ry="1.9" fill="#E46420" transform="rotate(1 444.5 1537.3)"/><circle cx="441.6" cy="1537" r="0.6" fill="#E46420" opacity="0.7"/><circle cx="447.3" cy="1535.2" r="0.8" fill="#E46420" opacity="0.7"/><ellipse cx="385.1" cy="1596" rx="4.8" ry="2.4" fill="#E46420" opacity="0.5" transform="rotate(-35 385.1 1596)"/><circle cx="387.5" cy="1594.1" r="0.9" fill="#E46420" opacity="0.7"/><circle cx="379.4" cy="1594.4" r="0.7" fill="#E46420" opacity="0.7"/><ellipse cx="396.6" cy="1599.6" rx="2.3" ry="1.6" fill="#E46420" transform="rotate(8 396.6 1599.6)"/><circle cx="399.9" cy="1607.3" r="0.5" fill="#E46420" opacity="0.7"/><circle cx="400.9" cy="1603.8" r="0.8" fill="#E46420" opacity="0.7"/><ellipse cx="395.9" cy="1610.4" rx="2.3" ry="1.6" fill="#E46420" transform="rotate(-37 395.9 1610.4)"/><circle cx="393.4" cy="1608.8" r="0.5" fill="#E46420" opacity="0.7"/><circle cx="400.9" cy="1610" r="0.5" fill="#E46420" opacity="0.7"/><ellipse cx="392.3" cy="1622.9" rx="1.9" ry="1.3" fill="#E46420" transform="rotate(17 392.3 1622.9)"/><circle cx="399.8" cy="1626.5" r="0.9" fill="#E46420" opacity="0.7"/><circle cx="384.1" cy="1617" r="0.8" fill="#E46420" opacity="0.7"/><ellipse cx="401.3" cy="1639.9" rx="2.6" ry="1.8" fill="#E46420" transform="rotate(-49 401.3 1639.9)"/><circle cx="405.9" cy="1643" r="0.4" fill="#E46420" opacity="0.7"/><circle cx="396.6" cy="1646" r="0.7" fill="#E46420" opacity="0.7"/><ellipse cx="395.9" cy="1274" rx="2.6" ry="1.9" fill="#E46420" transform="rotate(-54 395.9 1274)"/><circle cx="395" cy="1281.2" r="0.8" fill="#E46420" opacity="0.7"/><circle cx="392.9" cy="1271.7" r="0.4" fill="#E46420" opacity="0.7"/><ellipse cx="399.5" cy="1266.8" rx="2.1" ry="1.5" fill="#E46420" transform="rotate(-47 399.5 1266.8)"/><circle cx="396.6" cy="1263.4" r="0.6" fill="#E46420" opacity="0.7"/><circle cx="405.3" cy="1261.6" r="0.7" fill="#E46420" opacity="0.7"/><ellipse cx="1381.3" cy="607.9" rx="2.5" ry="1.7" fill="#E46420" transform="rotate(-42 1381.3 607.9)"/><circle cx="1382.9" cy="599.1" r="0.5" fill="#E46420" opacity="0.7"/><circle cx="1389.8" cy="602.9" r="0.7" fill="#E46420" opacity="0.7"/><ellipse cx="1400.8" cy="607.9" rx="1.9" ry="1.4" fill="#E46420" transform="rotate(17 1400.8 607.9)"/><circle cx="1397.6" cy="614.8" r="0.8" fill="#E46420" opacity="0.7"/><circle cx="1400.2" cy="610.1" r="0.4" fill="#E46420" opacity="0.7"/><ellipse cx="1415.8" cy="612.4" rx="2.3" ry="1.6" fill="#E46420" transform="rotate(16 1415.8 612.4)"/><circle cx="1407.2" cy="620.8" r="0.5" fill="#E46420" opacity="0.7"/><circle cx="1422.9" cy="605" r="0.6" fill="#E46420" opacity="0.7"/><ellipse cx="1439.8" cy="616.9" rx="1.7" ry="1.2" fill="#E46420" transform="rotate(18 1439.8 616.9)"/><circle cx="1432.7" cy="616.7" r="0.7" fill="#E46420" opacity="0.7"/><circle cx="1443.4" cy="615.2" r="0.7" fill="#E46420" opacity="0.7"/><ellipse cx="1457.8" cy="618.4" rx="4.3" ry="2.2" fill="#E46420" opacity="0.5" transform="rotate(-35 1457.8 618.4)"/><circle cx="1462.8" cy="614.7" r="0.9" fill="#E46420" opacity="0.7"/><circle cx="1456.7" cy="616.3" r="0.5" fill="#E46420" opacity="0.7"/><ellipse cx="1466.7" cy="624.4" rx="4.3" ry="2.2" fill="#E46420" opacity="0.5" transform="rotate(-35 1466.7 624.4)"/><circle cx="1457.9" cy="620.8" r="0.7" fill="#E46420" opacity="0.7"/><circle cx="1463.9" cy="618.9" r="0.8" fill="#E46420" opacity="0.7"/><ellipse cx="1474.2" cy="624.4" rx="2.4" ry="1.7" fill="#E46420" transform="rotate(-14 1474.2 624.4)"/><circle cx="1472.8" cy="627.1" r="0.7" fill="#E46420" opacity="0.7"/><circle cx="1469.1" cy="621.7" r="0.9" fill="#E46420" opacity="0.7"/><ellipse cx="1481.7" cy="633.4" rx="4.3" ry="2.2" fill="#E46420" opacity="0.5" transform="rotate(-35 1481.7 633.4)"/><circle cx="1478.8" cy="632.2" r="0.4" fill="#E46420" opacity="0.7"/><circle cx="1476.6" cy="627.4" r="0.9" fill="#E46420" opacity="0.7"/><ellipse cx="1487.7" cy="646.9" rx="4.3" ry="2.2" fill="#E46420" opacity="0.5" transform="rotate(-35 1487.7 646.9)"/><circle cx="1491.8" cy="653.6" r="0.9" fill="#E46420" opacity="0.7"/><circle cx="1489.7" cy="654.7" r="0.7" fill="#E46420" opacity="0.7"/><ellipse cx="1393.3" cy="979.5" rx="1.9" ry="1.4" fill="#E46420" transform="rotate(-36 1393.3 979.5)"/><circle cx="1400.6" cy="987.6" r="0.6" fill="#E46420" opacity="0.7"/><circle cx="1398.3" cy="977.8" r="0.9" fill="#E46420" opacity="0.7"/><ellipse cx="1400.8" cy="991.5" rx="2.4" ry="1.7" fill="#E46420" transform="rotate(-23 1400.8 991.5)"/><circle cx="1409.1" cy="982.8" r="0.8" fill="#E46420" opacity="0.7"/><circle cx="1392.3" cy="985.2" r="0.7" fill="#E46420" opacity="0.7"/><ellipse cx="1415.8" cy="991.5" rx="1.6" ry="1.1" fill="#E46420" transform="rotate(0 1415.8 991.5)"/><circle cx="1407.5" cy="995.9" r="0.5" fill="#E46420" opacity="0.7"/><circle cx="1414.6" cy="988.7" r="0.8" fill="#E46420" opacity="0.7"/><ellipse cx="1423.3" cy="1000.4" rx="2.2" ry="1.6" fill="#E46420" transform="rotate(-24 1423.3 1000.4)"/><circle cx="1416.9" cy="999.4" r="0.9" fill="#E46420" opacity="0.7"/><circle cx="1422.3" cy="995.2" r="0.6" fill="#E46420" opacity="0.7"/><ellipse cx="1432.3" cy="1009.4" rx="2.3" ry="1.6" fill="#E46420" transform="rotate(-24 1432.3 1009.4)"/><circle cx="1440.9" cy="1018.1" r="0.8" fill="#E46420" opacity="0.7"/><circle cx="1430" cy="1003.3" r="0.6" fill="#E46420" opacity="0.7"/><ellipse cx="1439.8" cy="1003.4" rx="2" ry="1.4" fill="#E46420" transform="rotate(7 1439.8 1003.4)"/><circle cx="1448.7" cy="998.5" r="0.9" fill="#E46420" opacity="0.7"/><circle cx="1436" cy="995" r="0.6" fill="#E46420" opacity="0.7"/><ellipse cx="1454.8" cy="1006.4" rx="1.9" ry="1.3" fill="#E46420" transform="rotate(-22 1454.8 1006.4)"/><circle cx="1459.2" cy="1014.2" r="0.7" fill="#E46420" opacity="0.7"/><circle cx="1446" cy="1008.8" r="0.5" fill="#E46420" opacity="0.7"/><ellipse cx="1469.7" cy="1009.4" rx="1.5" ry="1.1" fill="#E46420" transform="rotate(-54 1469.7 1009.4)"/><circle cx="1460.8" cy="1018.1" r="0.8" fill="#E46420" opacity="0.7"/><circle cx="1467.1" cy="1017.8" r="0.6" fill="#E46420" opacity="0.7"/><ellipse cx="1484.7" cy="1006.4" rx="2" ry="1.5" fill="#E46420" transform="rotate(2 1484.7 1006.4)"/><circle cx="1479" cy="997.7" r="0.6" fill="#E46420" opacity="0.7"/><circle cx="1481.8" cy="998.4" r="0.7" fill="#E46420" opacity="0.7"/><ellipse cx="1339.1" cy="1144.3" rx="1.5" ry="1.1" fill="#E46420" transform="rotate(-21 1339.1 1144.3)"/><circle cx="1334.8" cy="1147.4" r="0.6" fill="#E46420" opacity="0.7"/><circle cx="1343.1" cy="1141.4" r="0.4" fill="#E46420" opacity="0.7"/><ellipse cx="1345" cy="1148.3" rx="1.5" ry="1" fill="#E46420" transform="rotate(-39 1345 1148.3)"/><circle cx="1352.4" cy="1153.8" r="0.5" fill="#E46420" opacity="0.7"/><circle cx="1338.5" cy="1152.9" r="0.8" fill="#E46420" opacity="0.7"/><ellipse cx="1356.9" cy="1142.3" rx="1.9" ry="1.3" fill="#E46420" transform="rotate(-17 1356.9 1142.3)"/><circle cx="1357.8" cy="1138.4" r="0.5" fill="#E46420" opacity="0.7"/><circle cx="1348.2" cy="1144.9" r="0.8" fill="#E46420" opacity="0.7"/><ellipse cx="1368.7" cy="1138.4" rx="2.3" ry="1.6" fill="#E46420" transform="rotate(-1 1368.7 1138.4)"/><circle cx="1369.1" cy="1143" r="0.8" fill="#E46420" opacity="0.7"/><circle cx="1377.3" cy="1138.7" r="0.6" fill="#E46420" opacity="0.7"/><ellipse cx="1378.6" cy="1152.2" rx="2" ry="1.4" fill="#E46420" transform="rotate(-23 1378.6 1152.2)"/><circle cx="1372.9" cy="1155.5" r="0.9" fill="#E46420" opacity="0.7"/><circle cx="1379.5" cy="1150.6" r="0.6" fill="#E46420" opacity="0.7"/><ellipse cx="1390.5" cy="1148.3" rx="1.8" ry="1.3" fill="#E46420" transform="rotate(-28 1390.5 1148.3)"/><circle cx="1389.6" cy="1156.5" r="0.5" fill="#E46420" opacity="0.7"/><circle cx="1387.2" cy="1148.7" r="0.6" fill="#E46420" opacity="0.7"/><ellipse cx="1418.2" cy="1158.2" rx="4.1" ry="2" fill="#E46420" opacity="0.5" transform="rotate(-35 1418.2 1158.2)"/><circle cx="1424.5" cy="1164.1" r="0.9" fill="#E46420" opacity="0.7"/><circle cx="1420.2" cy="1149.7" r="0.7" fill="#E46420" opacity="0.7"/><ellipse cx="1430" cy="1170" rx="4.1" ry="2" fill="#E46420" opacity="0.5" transform="rotate(-35 1430 1170)"/><circle cx="1430.9" cy="1169.8" r="0.5" fill="#E46420" opacity="0.7"/><circle cx="1433.8" cy="1177.4" r="0.5" fill="#E46420" opacity="0.7"/><ellipse cx="1453.8" cy="1176" rx="4.1" ry="2" fill="#E46420" opacity="0.5" transform="rotate(-35 1453.8 1176)"/><circle cx="1456.8" cy="1173.6" r="0.7" fill="#E46420" opacity="0.7"/><circle cx="1460.9" cy="1184.2" r="0.7" fill="#E46420" opacity="0.7"/><ellipse cx="1309.4" cy="1168.1" rx="1.6" ry="1.1" fill="#E46420" transform="rotate(-16 1309.4 1168.1)"/><circle cx="1303.7" cy="1166" r="0.8" fill="#E46420" opacity="0.7"/><circle cx="1306.1" cy="1163.9" r="0.9" fill="#E46420" opacity="0.7"/><ellipse cx="1394.4" cy="1579.3" rx="2.3" ry="1.6" fill="#E46420" transform="rotate(-20 1394.4 1579.3)"/><circle cx="1396.4" cy="1580.3" r="0.4" fill="#E46420" opacity="0.7"/><circle cx="1393" cy="1577.7" r="0.8" fill="#E46420" opacity="0.7"/><ellipse cx="1404.3" cy="1605" rx="1.9" ry="1.3" fill="#E46420" transform="rotate(-35 1404.3 1605)"/><circle cx="1408.6" cy="1608.5" r="0.5" fill="#E46420" opacity="0.7"/><circle cx="1406.7" cy="1598.2" r="0.8" fill="#E46420" opacity="0.7"/><ellipse cx="1414.2" cy="1593.1" rx="2.2" ry="1.6" fill="#E46420" transform="rotate(-24 1414.2 1593.1)"/><circle cx="1422.7" cy="1596.6" r="0.6" fill="#E46420" opacity="0.7"/><circle cx="1422.9" cy="1592.4" r="0.5" fill="#E46420" opacity="0.7"/><ellipse cx="1424.1" cy="1610.9" rx="1.9" ry="1.4" fill="#E46420" transform="rotate(-38 1424.1 1610.9)"/><circle cx="1419.3" cy="1619.1" r="0.5" fill="#E46420" opacity="0.7"/><circle cx="1431.4" cy="1605.1" r="0.9" fill="#E46420" opacity="0.7"/><ellipse cx="1434" cy="1624.8" rx="2" ry="1.5" fill="#E46420" transform="rotate(-59 1434 1624.8)"/><circle cx="1427.5" cy="1616.7" r="0.8" fill="#E46420" opacity="0.7"/><circle cx="1428.2" cy="1619.2" r="0.8" fill="#E46420" opacity="0.7"/><ellipse cx="1453.8" cy="1622.8" rx="2.2" ry="1.6" fill="#E46420" transform="rotate(-54 1453.8 1622.8)"/><circle cx="1454.2" cy="1616.5" r="0.5" fill="#E46420" opacity="0.7"/><circle cx="1458.8" cy="1621.6" r="0.5" fill="#E46420" opacity="0.7"/><ellipse cx="1457.7" cy="1199.7" rx="1.5" ry="1" fill="#E46420" transform="rotate(-47 1457.7 1199.7)"/><circle cx="1451.1" cy="1193.3" r="0.5" fill="#E46420" opacity="0.7"/><circle cx="1455.1" cy="1207.2" r="0.4" fill="#E46420" opacity="0.7"/><ellipse cx="1469.6" cy="1205.6" rx="1.6" ry="1.1" fill="#E46420" transform="rotate(-13 1469.6 1205.6)"/><circle cx="1478.5" cy="1214.3" r="0.5" fill="#E46420" opacity="0.7"/><circle cx="1466.9" cy="1213.7" r="0.6" fill="#E46420" opacity="0.7"/><ellipse cx="1481.4" cy="1227.4" rx="2.1" ry="1.5" fill="#E46420" transform="rotate(-20 1481.4 1227.4)"/><circle cx="1480.9" cy="1231.7" r="0.7" fill="#E46420" opacity="0.7"/><circle cx="1487.8" cy="1226.3" r="0.6" fill="#E46420" opacity="0.7"/><ellipse cx="1487.4" cy="1239.2" rx="1.9" ry="1.4" fill="#E46420" transform="rotate(-21 1487.4 1239.2)"/><circle cx="1486.3" cy="1239.8" r="0.8" fill="#E46420" opacity="0.7"/><circle cx="1482" cy="1240.9" r="0.9" fill="#E46420" opacity="0.7"/><ellipse cx="1421.1" cy="198.2" rx="2.1" ry="1.5" fill="#E46420" transform="rotate(-38 1421.1 198.2)"/><circle cx="1417.5" cy="204.7" r="0.9" fill="#E46420" opacity="0.7"/><circle cx="1417.8" cy="204.3" r="0.5" fill="#E46420" opacity="0.7"/><ellipse cx="1447.6" cy="202.3" rx="1.9" ry="1.3" fill="#E46420" transform="rotate(-53 1447.6 202.3)"/><circle cx="1446" cy="209" r="0.5" fill="#E46420" opacity="0.7"/><circle cx="1438.9" cy="208.9" r="0.8" fill="#E46420" opacity="0.7"/><ellipse cx="1471" cy="216.5" rx="2.2" ry="1.6" fill="#E46420" transform="rotate(-13 1471 216.5)"/><circle cx="1471.5" cy="221.3" r="0.4" fill="#E46420" opacity="0.7"/><circle cx="1471.8" cy="215.5" r="0.5" fill="#E46420" opacity="0.7"/><ellipse cx="1468" cy="239" rx="1.9" ry="1.3" fill="#E46420" transform="rotate(-19 1468 239)"/><circle cx="1467.2" cy="240.1" r="0.7" fill="#E46420" opacity="0.7"/><circle cx="1469.6" cy="242.6" r="0.8" fill="#E46420" opacity="0.7"/><ellipse cx="1475.1" cy="257.3" rx="2" ry="1.4" fill="#E46420" transform="rotate(-16 1475.1 257.3)"/><circle cx="1481.6" cy="263.3" r="0.5" fill="#E46420" opacity="0.7"/><circle cx="1483.7" cy="253.2" r="0.5" fill="#E46420" opacity="0.7"/><ellipse cx="1327.4" cy="268.5" rx="1.8" ry="1.3" fill="#E46420" transform="rotate(-17 1327.4 268.5)"/><circle cx="1331.5" cy="264" r="0.6" fill="#E46420" opacity="0.7"/><circle cx="1323.2" cy="261.8" r="0.6" fill="#E46420" opacity="0.7"/><ellipse cx="1335.5" cy="280.7" rx="2" ry="1.4" fill="#E46420" transform="rotate(-38 1335.5 280.7)"/><circle cx="1344.3" cy="281.2" r="0.6" fill="#E46420" opacity="0.7"/><circle cx="1337.6" cy="273" r="0.6" fill="#E46420" opacity="0.7"/><ellipse cx="1349.8" cy="301.1" rx="2.1" ry="1.5" fill="#E46420" transform="rotate(-23 1349.8 301.1)"/><circle cx="1341.9" cy="307.5" r="0.6" fill="#E46420" opacity="0.7"/><circle cx="1358.4" cy="298.7" r="0.5" fill="#E46420" opacity="0.7"/><path d="M277.3 220.5C278.4 223.8 281.8 236.3 284 240.5C286.2 244.7 287.4 247.3 290.7 245.6C294 243.9 300.4 236.9 304 230.5C307.6 224.1 311 210.9 312.4 207" fill="none" stroke="#c9b79a" stroke-width="0.6" opacity="0.8"/></g>
<g id="figure"><path d="M907 116C917.5 115 927 117.2 935 120C943 122.8 950.2 128 955 133C959.8 138 961 142.2 964 150C967 157.8 972.1 169.4 973 180C973.9 190.6 972 202.4 969.5 213.6C967 224.8 961.8 237.8 958 247C954.2 256.2 949.2 263.2 947 269C944.8 274.8 945.3 274.8 945 282C944.7 289.2 943.9 304.8 945 312C946.1 319.2 948.4 321 951.7 325C955 329 960.6 332.7 965 336C969.4 339.3 973 342.7 978 345C983 347.3 988 348.2 995 350C1002 351.8 1020 356 1020 356C1020 356 1012.7 402 1010 420C1007.3 438 1005.8 447.3 1004 464C1002.2 480.7 1000.4 503.2 999 520C997.6 536.8 996.9 555.8 995.4 565C993.9 574.2 991.6 570.2 990 575C988.4 579.8 987.5 588 986 593.5C984.5 599 981.3 601.9 980.7 608C980.1 614.1 981.3 621.7 982.5 630C983.7 638.3 984.6 649.4 988 658C991.4 666.6 999 677 1002.7 681.7C1006.4 686.4 1007 680.7 1010 686C1013 691.3 1017.3 703 1021 713.5C1024.7 724 1029 737.1 1032 749C1035 760.9 1037.3 774.7 1039 785C1040.7 795.3 1042.8 803.5 1042 811C1041.2 818.5 1034 830 1034 830C1034 830 1031.2 844.8 1030 852C1028.8 859.2 1028 863.8 1027 873C1026 882.2 1025.7 898 1024 907C1022.3 916 1018.7 918.7 1017 927C1015.3 935.3 1015.3 946.5 1014 957C1012.7 967.5 1010.4 981.2 1009 990C1007.6 998.8 1006.6 1002.5 1005.6 1010C1004.6 1017.5 1003.6 1029.2 1003 1035C1002.4 1040.8 1002 1045 1002 1045C1002 1045 925 1045 925 1045C925 1045 925.3 1041.2 924.5 1032C923.7 1022.8 921.6 1002.5 920.4 990C919.1 977.5 917.8 968.2 917 957C916.2 945.8 915.7 934.2 915.4 923C915.1 911.8 915.3 903 915.4 890C915.5 877 915.9 859 916 845C916.1 831 918.7 812.8 916 806C913.3 799.2 905.2 804 900 804C894.8 804 887.3 800 885 806C882.7 812 886 826 886 840C886 854 885.4 878.3 885.3 890C885.2 901.7 885.8 904.4 885.3 910C884.8 915.6 883.1 915.7 882 923.5C880.9 931.3 879.7 947.8 878.6 957C877.5 966.2 876.1 970.3 875.3 978.6C874.5 986.9 873.8 998.9 873.6 1007C873.5 1015.1 874.4 1027 874.4 1027C874.4 1027 875 1045 875 1045C875 1045 811 1045.8 798 1045C785 1044.2 797.3 1043.5 796.8 1040C796.3 1036.5 795.8 1029.2 795 1023.7C794.2 1018.2 793.7 1015.4 791.8 1007C789.9 998.6 785.9 984.8 783.4 973.6C780.9 962.4 778.9 951.1 776.7 940C774.5 928.9 771.1 917.9 770 906.8C768.9 895.7 770 873.4 770 873.4C770 873.4 766.6 858.4 765.5 848C764.4 837.6 763.8 823 763.5 811C763.2 799 762.2 787 763.5 776C764.8 765 767.9 755.2 771 745C774.1 734.8 778.3 723.8 782 715C785.7 706.2 790.8 697.5 793 692C795.2 686.5 793.4 686.5 795 681.7C796.6 676.9 799.4 670 802.5 663C805.6 656 810.5 647.9 813.5 639.4C816.5 630.9 819.3 620.1 820.8 612C822.3 603.9 819.8 598.2 822.7 590.7C825.6 583.2 837.8 575 838 567C838.2 559 828 550.8 824 543C820 535.2 816.7 530.5 814 520C811.3 509.5 810.8 500 808 480C805.2 460 800 420.3 797 400C794 379.7 790 358 790 358C790 358 811 347 811 347C811 347 834.3 339.7 842.5 336C850.7 332.3 855.4 328.7 860 325C864.6 321.3 868.3 321.5 870 314C871.7 306.5 869.8 287.5 870 280C870.2 272.5 872 272.7 871.5 269C871 265.3 869.6 263.5 867 258C864.4 252.5 858.8 247.2 856 236C853.2 224.8 850 205.8 850 191C850 176.2 852.3 157.8 856 147C859.7 136.2 863.5 131.2 872 126C880.5 120.8 896.5 117 907 116Z" fill="#8E5233"/><path d="M806 385C803 371.7 797.6 365.2 794 360C790.4 354.8 784.6 353.5 784.6 353.5C784.6 353.5 769.4 360.1 764.6 367C759.8 373.9 757.9 382.8 755.7 395C753.6 407.2 752.5 426.9 751.7 440C750.9 453.1 751.3 464.3 751 473.6C750.7 482.9 750.3 487.8 750 496C749.7 504.2 749.4 510 749.4 522.6C749.4 535.2 750.2 559.4 750 571.6C749.8 583.8 749.7 586.4 748 596C746.3 605.6 742.4 618.3 740 629.5C737.6 640.7 735.2 652.9 733.4 663C731.6 673.1 730.3 682.3 729 690C727.7 697.7 725.9 697.7 725.5 709C725.1 720.3 727.3 743.7 726.7 758C726.1 772.3 723.4 782.7 721.8 795C720.2 807.3 718.8 819.7 716.9 832C715 844.3 711.9 858.8 710.7 869C709.5 879.2 708.5 886.2 709.5 893.5C710.5 900.8 712.8 906.4 716.9 913C721 919.6 728.7 927.4 734 933C739.3 938.6 745.3 944.2 748.8 946.4C752.3 948.6 753.2 947.3 755 946.4C756.8 945.5 759 944.2 759.5 941C760 937.8 760.7 933 758.3 927C755.9 921 746.8 910.2 745 905C743.2 899.8 745.6 901.2 747.6 895.7C749.6 890.2 755 879.8 757 871.8C759 863.8 759.9 855 759.5 847.8C759.1 840.6 756.5 834.2 754.7 828.6C752.9 823 749.6 819 748.8 814.2C748 809.4 747.8 806.2 750 799.8C752.2 793.4 757.8 784.1 762 775.8C766.2 767.5 770.3 762.6 775 750C779.7 737.4 787 711.2 790 700C793 688.8 792.6 691.6 793 683C793.4 674.4 792.4 660.4 792.4 648.6C792.4 636.8 792.9 624.6 793.3 612C793.7 599.4 794.2 580.1 795 573C795.8 565.9 796.4 578.1 798 569.4C799.6 560.7 802.9 531.7 804.6 521C806.3 510.3 807.7 511.8 808 505C808.3 498.2 805.8 490.8 806.5 480C807.2 469.2 812.1 455.8 812 440C811.9 424.2 809 398.3 806 385Z" fill="#8E5233"/><path d="M991.8 350.6C995.2 343.3 1013.3 355.6 1020.7 356C1028.1 356.4 1030.8 351.2 1036 353C1041.2 354.8 1048.2 360.5 1052 367C1055.8 373.5 1057.3 382.3 1058.6 392C1059.9 401.7 1060.1 415.8 1059.7 425C1059.3 434.2 1057.1 435.2 1056 447C1054.9 458.8 1053.7 480.5 1053 496C1052.3 511.5 1051.8 525.2 1052 540C1052.2 554.8 1052.9 570.1 1054 585C1055.1 599.9 1057.3 614.7 1058.6 629.5C1059.9 644.3 1061 660.8 1062 674C1063 687.2 1063.9 698.7 1064.7 709C1065.5 719.3 1065.8 726.5 1067 736C1068.2 745.5 1072.2 758.7 1072 765.7C1071.8 772.7 1066.2 772.7 1066 778C1065.8 783.3 1069.2 789.5 1070.8 797.7C1072.4 805.9 1075.4 817.2 1075.8 827C1076.2 836.8 1074.6 847.7 1073 856.7C1071.4 865.7 1069.2 872.8 1066 881C1062.8 889.2 1057.8 898.4 1053.6 905.8C1049.4 913.2 1044.7 920.2 1041 925.5C1037.3 930.8 1034.5 935.4 1031.5 937.8C1028.5 940.2 1025.1 940.8 1023 940C1020.9 939.2 1018.8 937 1019 932.9C1019.2 928.8 1021.9 922.2 1024 915.6C1026.1 909 1030 901.3 1031.5 893.5C1033 885.7 1032.4 877.2 1033 869C1033.6 860.8 1034.5 852.2 1035 844C1035.5 835.8 1036.1 827.5 1035.8 820C1035.5 812.5 1034.8 809 1033 799C1031.2 789 1027.7 772.9 1025 760C1022.3 747.1 1019.4 731.2 1016.8 721.5C1014.2 711.8 1011.2 707.5 1009.4 701.8C1007.5 696 1006.5 691.3 1005.7 687C1004.9 682.7 1004.3 682.4 1004.6 676C1004.9 669.6 1007 659.3 1007.3 648.6C1007.6 637.9 1007.2 624.3 1006.4 612C1005.6 599.7 1003.8 589.8 1002.7 575C1001.6 560.2 1000.3 537.7 1000 523C999.7 508.3 1000.1 496.4 1001 487C1001.9 477.6 1005.7 481.3 1005.5 466.8C1005.3 452.3 1002.3 419.4 1000 400C997.7 380.6 988.3 357.9 991.8 350.6Z" fill="#8E5233"/><path d="M842.9 457.6L1002.8 455.8L1005.5 466.8L1000.9 487L998.2 523.7L995.8 565L881.5 565L842.9 523.7L828.2 496.2L819 472.3Z" fill="#502009" stroke="#502009" stroke-width="3" stroke-linejoin="round"/><path d="M880 697C886 697 910 697 916 697L921.7 697.4C922 700.1 922.9 706.3 923.5 713.5C924.1 720.6 923.5 731.1 925.3 740.2C927.1 749.2 929.6 758.4 934.2 767.8C938.8 777.1 944.5 787.1 952.9 796.3C961.4 805.5 971.6 815.3 985 823C998.4 830.7 1025.1 839.4 1033.1 842.6L1033 850C1032.6 850.6 1031.5 849.5 1030.6 853.4C1029.6 857.3 1027.8 870.1 1027.3 873.4L1027.3 881.8C1017 896.7 975.8 956.2 965.5 971.1L965.5 971.1C957.3 958.2 924.4 906.4 916.2 893.4L915.4 893C915.4 887.5 915.3 868 915.4 860C915.5 852 915.9 852.2 916 845C916.1 837.8 916 821.7 916 817L916 817C915.9 815.2 916.3 807.5 915.5 806.5C914.7 805.4 913.6 809.7 911 810.7C908.5 811.7 904.1 812.5 900.4 812.5C896.6 812.6 891.3 811.3 888.8 811.1C886.3 810.9 885.8 811.4 885.2 811.4L885.2 812C885.3 816.7 886 827.8 886 840C886 852.2 885.4 877.5 885.3 885L885.3 881.8C877.4 894.8 845.6 947.2 837.7 960.3L837.7 960.3C826.4 948.6 781.3 901.8 770 890.1L770 890C770 887.2 770.5 880.4 770 873.4C769.5 866.4 767.5 852.6 766.7 848C765.9 843.4 765.3 846.3 765 846L764.9 843.5C772.7 840.7 798.1 833.9 811.3 826.6C824.5 819.3 835.3 809.2 844.2 799.9C853.1 790.5 859.7 780.4 864.7 770.5C869.8 760.5 872.4 749.7 874.5 740.2C876.7 730.7 877.4 720.6 877.6 713.5C877.7 706.3 875.8 700.1 875.4 697.4Z" fill="#502009"/><path d="M966.3 985.3C959.5 994.2 932.2 1029.9 925.4 1038.8L924.5 1032C924.8 1036.3 925.4 1034.4 926 1058C926.6 1081.6 928 1128.7 928 1173.5C928 1218.3 927 1282.2 926 1327C925 1371.8 924.2 1413.2 922 1442C919.8 1470.8 916.4 1483.4 912.7 1499.7C909 1516 902.1 1533.3 900 1540L900 1540C906.7 1563.3 887.5 1656.7 940 1680C992.5 1703.3 1169.2 1680 1215 1680L1215 1680C1211 1675.8 1199.5 1664 1191 1655C1182.5 1646 1174.2 1638.5 1164 1626C1153.8 1613.5 1141 1597.8 1129.5 1580C1118 1562.2 1105.2 1542 1095 1519C1084.8 1496 1075.7 1467.7 1068 1442C1060.3 1416.3 1055.4 1390.6 1049 1365C1042.6 1339.4 1036.2 1314.1 1029.8 1288.6C1023.4 1263.1 1015.7 1237.6 1010.6 1212C1005.5 1186.4 1000.6 1160.7 999 1135C997.4 1109.3 1000.3 1074.7 1001 1058C1001.7 1041.3 1002.7 1038.8 1003 1035L1003.9 1025.4C997.6 1018.7 972.6 992 966.3 985.3Z" fill="#502009"/><path d="M838.5 973.6C831.6 984.8 803.7 1029.3 796.8 1040.4L797 1040C797.4 1043 798.8 1045.3 799.5 1058C800.2 1070.7 802.8 1096.8 801.5 1116C800.2 1135.2 795.6 1151.2 792 1173.5C788.4 1195.8 783.8 1224.4 780 1250C776.2 1275.6 772.8 1301.3 769 1327C765.2 1352.7 761.5 1378.4 757 1404C752.5 1429.6 749 1456.2 742 1480.5C735 1504.8 724.6 1529.1 715 1549.5C705.4 1569.9 695.9 1585.4 684.4 1603C672.9 1620.6 655.1 1642.2 646 1655C636.9 1667.8 632.7 1675.8 630 1680L630 1680C687.5 1680 917.5 1680 975 1680L975 1680C972 1675.8 963.2 1665.2 957 1655C950.8 1644.8 944.1 1634.9 937.7 1618.6C931.3 1602.3 924.3 1580 918.5 1557C912.7 1534 907.5 1506 903 1480.5C898.5 1455 895.1 1429.6 891.6 1404C888.1 1378.4 884.9 1352.7 882 1327C879.1 1301.3 875.6 1275.6 874 1250C872.4 1224.4 872.5 1199 872.5 1173.5C872.5 1148 873.1 1117.5 874 1097C874.9 1076.5 877.9 1062.4 878 1050.7C878.1 1039 875.1 1034.6 874.4 1027C873.7 1019.4 873.9 1008.7 873.8 1005L873.9 1003.7C868 998.7 844.4 978.6 838.5 973.6Z" fill="#502009"/><path d="M854 686.7C854 688.2 854.3 691.2 854 695.6C853.7 700.1 853.4 706 852.2 713.5C851.1 720.9 849.6 731.3 846.9 740.2C844.2 749.1 841 758.9 836.2 766.9C831.5 774.9 825.5 782 818.4 788.3C811.3 794.5 802.5 800 793.5 804.3C784.4 808.6 769 812.5 764.1 814.1L766.7 848.9C774.7 845.9 800.9 839.1 814.8 831C828.8 823 841 810.9 850.5 800.8C860 790.7 866.8 780.6 871.8 770.5C876.9 760.4 879 749.7 880.8 740.2C882.5 730.7 882.8 720.6 882.5 713.5C882.2 706.3 879.6 700.1 879 697.4Z" fill="#D5BBA2"/><path d="M862.9 686.7C862.8 691.2 863.1 704.5 862 713.5C861 722.4 859.5 730.7 856.7 740.2C853.9 749.7 850.3 761.3 845.1 770.5C839.9 779.7 833.2 788.3 825.5 795.4C817.8 802.5 809 808.3 798.8 813.2C788.6 818.1 769.8 822.9 764.1 824.8L764.9 838.2C772.1 835.5 795.5 828.7 807.7 822.1C819.9 815.6 829.7 807.6 838 799C846.3 790.4 852.5 780.3 857.6 770.5C862.6 760.7 865.8 749.7 868.3 740.2C870.8 730.7 872.1 722.4 872.7 713.5C873.3 704.5 872 691.2 871.8 686.7Z" fill="#F7EBDC"/><path d="M913.7 697.4C913.7 700.1 913 706.3 913.7 713.5C914.5 720.6 915.9 730.7 918.2 740.2C920.4 749.7 922.3 760.4 927.1 770.5C931.8 780.6 937.8 791 946.7 800.8C955.6 810.6 966.3 821.2 980.5 829.3C994.8 837.3 1023.6 845.6 1032.2 848.9L1033.1 811.4C1028.2 809.4 1012.8 804 1003.7 799C994.6 793.9 985.6 787.4 978.8 781.2C971.9 774.9 967.2 768.7 962.7 761.6C958.3 754.4 954.7 746.4 952 738.4C949.4 730.4 947.9 722.1 946.7 713.5C945.5 704.8 945.2 691.2 944.9 686.7Z" fill="#D5BBA2"/><path d="M928.9 686.7C929 691.2 929.2 704.5 929.8 713.5C930.3 722.4 930.5 731.3 932.4 740.2C934.4 749.1 936.9 758.3 941.3 766.9C945.8 775.5 951.1 783.5 959.2 791.8C967.2 800.2 977.1 809.4 989.4 816.8C1001.8 824.2 1025.8 833.1 1033.1 836.4L1033.1 823.9C1026.7 821 1005.6 812.3 994.8 806.1C983.9 799.9 975.5 793.6 968.1 786.5C960.6 779.4 954.7 771.1 950.2 763.3C945.8 755.6 943.4 748.5 941.3 740.2C939.3 731.9 938.7 722.4 937.8 713.5C936.9 704.5 936.3 691.2 936 686.7Z" fill="#F7EBDC"/><path d="M791.7 686.7L854 686.7L854 696.5L790.8 696.5Z" fill="#D5BBA2"/><path d="M871.8 685.8L929.8 685.8L929.8 697.8L913.7 697.8L879 697.8L871.8 697.8Z" fill="#D5BBA2"/><path d="M893.4 627.5L795.1 682.6L792.4 686.3L850.2 686.3L907.2 646.8Z" fill="#D5BBA2"/><path d="M896.5 630.6L807.1 685L844.7 685.4L905.4 642.7Z" fill="#F7EBDC"/><path d="M927.4 621.4L988.1 660L1003.1 681.7L969.7 683.5L914.6 647.1Z" fill="#D5BBA2"/><path d="M924.7 628.4L985.3 665.2L1001.8 682.6L973.4 682.6L917.3 643.5Z" fill="#F7EBDC"/><path d="M848.4 672.9L944 672.1L973.4 682.4L1003.1 682.4L1002.4 686.3L937.5 686.3L848.4 685.9Z" fill="#F7EBDC"/><path d="M862.9 684.9L871.8 684.9L871.8 688.5L862.9 688.5Z" fill="#F7EBDC"/><path d="M928.9 684.9L936 684.9L936 688.5L928.9 688.5Z" fill="#F7EBDC"/><path d="M821.8 568.7L881.5 565.9L995.8 565.9L990.3 569.2L989.9 582.5L980.7 584.7L938.4 584.3L927.4 589.3L901.7 589.3L853.9 589.8L822.7 588.4Z" fill="#F7EBDC"/><path d="M938.4 583.9L980.7 584.3L990.3 582.1L927.4 620.7L914.6 604.9Z" fill="#F7EBDC"/><path d="M795.1 476.9C796.8 481.6 802.8 498.2 805.2 505.4C807.7 512.6 807.5 513.9 809.8 520C812.1 526.1 814.7 534 819 542C823.3 550 829.7 559.8 835.5 567.8C841.3 575.8 844.4 580.3 853.9 589.8C863.4 599.3 886.1 618.9 892.5 624.7L910.9 624.7C911.5 621.3 916.1 609.9 914.6 604C913 598.1 907.5 595.6 901.7 589.3C895.9 582.9 886.9 574.5 879.6 566C872.3 557.5 863.7 545.4 857.6 538.4C851.5 531.4 847.8 530.7 842.9 523.7C838 516.7 832.2 504.8 828.2 496.2C824.2 487.6 820.5 476.3 819 472.3Z" fill="#D5BBA2"/><path d="M799.4 474C801.1 478.8 807 495.3 809.5 502.5C812 509.7 811.8 511 814.1 517.1C816.4 523.2 819 531.1 823.3 539.1C827.6 547.1 834 556.9 839.8 564.9C845.6 572.9 848.7 577.4 858.2 586.9C867.7 596.4 890.4 616 896.8 621.8L910.9 624.7C911.5 621.3 916.1 609.9 914.6 604C913 598.1 907.5 595.6 901.7 589.3C895.9 582.9 886.9 574.5 879.6 566C872.3 557.5 863.7 545.4 857.6 538.4C851.5 531.4 847.8 530.7 842.9 523.7C838 516.7 832.2 504.8 828.2 496.2C824.2 487.6 820.5 476.3 819 472.3Z" fill="#F7EBDC"/><path d="M751.9 478.2L785.9 457.6L804.3 440.7L850.2 427.8L883.3 420.8L905.4 427.8L925.6 420.8L997.2 450.2L1006.4 459.4L1002.8 456.5L842.9 458L819 472.7L795.1 476.3L785.9 476.9L752.9 491.6Z" fill="#F7EBDC"/><path d="M785.9 351.4L899.9 401.6L925.6 409.5L1052.4 453L1052.4 468.6L1004.6 461.3L997.2 453.9L923.7 424.9L877.8 421.2L763.5 370.9Z" fill="#D5BBA2"/><path d="M781.9 356.2L896.2 404.7L923.7 415.3L1052.4 459.1L1052.4 472.7L1004.6 466.4L997.2 456.9L923.7 427.5L880.6 417.2L767.6 367.2Z" fill="#F7EBDC"/><path d="M989.9 350.7L1020.2 358.9L927.4 412.6L908.1 401.6Z" fill="#D5BBA2"/><path d="M995 352.5L1015.6 358L924.7 409.8L913.6 403.4Z" fill="#F7EBDC"/><path d="M899.9 428.2C908.9 427.8 914.5 431.6 923.7 433.7C933 435.9 935.7 435.2 939.4 437.4C943 439.5 943 441.2 939.4 442.9C935.7 444.6 931.7 444.9 923.7 444.7C915.8 444.5 913.9 441.8 905.4 442C896.8 442.2 892.8 445.7 887 445.7C881.2 445.7 881 444.3 880.6 442C880.1 439.6 880.7 438.8 885.2 435.5C889.7 432.3 890.9 428.6 899.9 428.2Z" fill="#8E5233"/><path d="M901.7 588.9C903 587 909.4 587.6 914.6 587.6C919.7 587.6 926.1 587 927.4 588.9C928.7 590.8 923.6 594.3 921 597.2C918.4 600 917.1 603.1 914.6 603.1C912 603.1 910.7 600 908.1 597.2C905.6 594.3 900.4 590.8 901.7 588.9Z" fill="#8E5233"/><path d="M907.2 648.6L939.4 671L876 671.8Z" fill="#8E5233"/><clipPath id="legL"><path d="M766.7 848L770 873.4L770 906.8L776.7 940L783.4 973.6L791.8 1007L795 1023.7L796.8 1048.8L800 1073.8L803.4 1090L873.6 1090L877 1073.8L878.6 1048.8L874.4 1027L873.6 1007L875.3 978.6L878.6 957L882 923.5L885.3 910L885.3 890L886 840Z"/></clipPath><clipPath id="legR"><path d="M916.2 840L915.4 890L915.4 923.5L917 957L920.4 990L923.7 1015.4L924.5 1032L927 1057L925.4 1090L1000.5 1090L1001.4 1065.5L1003 1040.4L1005.6 1010.4L1009 990L1014 957L1017 926.9L1024 906.8L1027.3 873.4L1030.6 853.4L1034 830Z"/></clipPath><g clip-path="url(#legL)"><path d="M766.7 869.7L838.5 939.4L824.3 961.9L766.7 906.5Z" fill="#D5BBA2"/><path d="M766.7 874.7L836.9 941.9L825.2 957.8L766.7 895.1Z" fill="#F7EBDC"/><path d="M851.9 956.9L882 987L882 1037.1L841 982Z" fill="#D5BBA2"/><path d="M851.9 959.4L882 989.5L882 1033.8L843.5 981.1Z" fill="#F7EBDC"/><path d="M888.6 856.4L888.6 896L851.1 957.8L836 940.2Z" fill="#D5BBA2"/><path d="M888.6 861.7L888.6 890.4L851.9 955.2L838.5 941.1Z" fill="#F7EBDC"/><path d="M823.5 960.3L838.5 981.1L795.1 1070.5L790.1 1023.7Z" fill="#D5BBA2"/><path d="M826 962.8L836.9 980.3L794.8 1068L791.8 1025.4Z" fill="#F7EBDC"/></g><g clip-path="url(#legR)"><path d="M913.7 858.4L965.5 948.6L950.4 972.8L913.7 922.7Z" fill="#D5BBA2"/><path d="M913.7 862L963.8 951.1L951.3 968.9L913.7 913Z" fill="#F7EBDC"/><path d="M981.3 971.1L1010.6 1013.7L1010.6 1056.3L967.1 991.2Z" fill="#D5BBA2"/><path d="M981.3 974.5L1010.6 1017.9L1010.6 1052.1L969.6 990.3Z" fill="#F7EBDC"/><path d="M1033.9 853L1027.3 904L981.3 969.4L964.6 948.6Z" fill="#D5BBA2"/><path d="M1033.9 857.5L1028.1 899.8L980.5 967.8L966.3 949.4Z" fill="#F7EBDC"/><path d="M949.6 972L966.3 992L923.7 1062.1L919.5 1026.2Z" fill="#D5BBA2"/><path d="M952.1 973.6L965.5 991.2L923.7 1058.8L920.7 1028.4Z" fill="#F7EBDC"/></g><path d="M906.5 308.5L913.5 315.5L906.5 322.5L899.5 315Z" fill="#E5A838" stroke="#E5A838" stroke-width="9" stroke-linejoin="round"/><path d="M885.2 416.3L902.1 406.5L921.5 411.3L903.5 424.2Z" fill="#E5A838" stroke="#E5A838" stroke-width="9" stroke-linejoin="round"/><path d="M904.4 608.6L911.2 607.8L922.5 616.3L919.1 631L907.9 639.8L896.2 626.2Z" fill="#E5A838" stroke="#E5A838" stroke-width="9" stroke-linejoin="round"/><path d="M837.7 945.6L847.9 957.3L838.5 975.3L827.3 961.1Z" fill="#E5A838" stroke="#E5A838" stroke-width="8" stroke-linejoin="round"/><path d="M964.8 955.6L977.3 971.1L966.1 986.7L954.1 972Z" fill="#E5A838" stroke="#E5A838" stroke-width="8" stroke-linejoin="round"/><path d="M750.5 522.5L803 521.5L798.5 556.7L796 568.5L755 570.5L750 565Z" fill="#E5A838" stroke="#E5A838" stroke-width="3" stroke-linejoin="round"/><path d="M1033 753L1058 738.5L1065 744L1069 765L1064.5 773L1044 789L1040 784Z" fill="#E5A838" stroke="#E5A838" stroke-width="6" stroke-linejoin="round"/><path d="M780.4 1198.4C788.7 1196.3 813.9 1189.9 830.2 1185.8C846.5 1181.6 870.2 1175.5 878.2 1173.5" fill="none" stroke="#1a0d06" stroke-width="0.8" opacity="0.55"/><path d="M860.9 1200.4C863.5 1215.1 871.8 1257.9 876.3 1288.6C880.8 1319.3 882.7 1349.4 887.8 1384.5C892.9 1419.7 899.3 1463.2 907 1499.7C914.7 1536.1 926.2 1577.4 933.8 1603.3C941.5 1629.2 949.8 1646.4 953 1655.1" fill="none" stroke="#1a0d06" stroke-width="0.9" opacity="0.5"/><path d="M1022.1 1250.2C1023.4 1257.9 1036.2 1267.5 1029.8 1296.3C1023.4 1325.1 995.9 1379.4 983.7 1422.9C971.6 1466.4 964.5 1524.6 956.9 1557.2C949.2 1589.8 942.2 1602 937.7 1618.6C933.2 1635.2 931.3 1650.6 930 1657" fill="none" stroke="#1a0d06" stroke-width="0.8" opacity="0.55"/><path d="M1001 1058.4C1000.7 1071.2 999.4 1122.3 999.1 1135.1" fill="none" stroke="#1a0d06" stroke-width="0.8" opacity="0.4"/><path d="M1022.1 1250.2C1025.9 1269.4 1037.5 1330.2 1045.1 1365.4C1052.8 1400.5 1059.2 1432.5 1068.2 1461.3C1077.1 1490.1 1086.1 1513.1 1098.8 1538C1111.6 1563 1133.4 1595 1144.9 1610.9C1156.4 1626.9 1164.1 1630.1 1167.9 1634" fill="none" stroke="#1a0d06" stroke-width="0.8" opacity="0.4"/><path d="M926.2 1058.4C926.8 1084 930 1160.7 930 1211.9C930 1263 927.4 1321.9 926.2 1365.4C924.9 1408.8 923 1454.9 922.3 1472.8" fill="none" stroke="#1a0d06" stroke-width="0.8" opacity="0.45"/><path d="M868.6 1058.4C869.4 1077.6 872.9 1149.2 873.2 1173.5C873.5 1197.8 871 1199.1 870.5 1204.2" fill="none" stroke="#1a0d06" stroke-width="0.8" opacity="0.35"/></g>
<g id="hair"><filter id="gb" x="-50%" y="-50%" width="200%" height="200%"><feGaussianBlur stdDeviation="0.9"/></filter><ellipse cx="855.9" cy="101.2" rx="5" ry="6.1" fill="#E5A838" filter="url(#gb)"/><path d="M854.8 98.5q-1.4 -1.2 -0.1 -2.4 0.4 2 1.3 2.1 1.2 1.8 -0.3 3.1 1.7 -0.1 1.2 1.1 1.2 0.2 0.4 2.2 -0.8 -0.6 -2 1.4 0.1 -0.8 1.3 -2.1 -1.6 -0.7 -1.7 -1.8 2.4 -1.9 2 -1.5 0.9 -1.1 1.8 0.6 1.2 0.9 0.1 2.9 -1.5 1.5 -2.8 1 -1.9 -0.9 -1.2 -2.9 0.8 -0.1 2.2 -1.2" fill="none" stroke="#3a2a10" stroke-width="0.5" opacity="0.7"/><ellipse cx="896" cy="106.7" rx="4.5" ry="5.5" fill="#E5A838" filter="url(#gb)"/><path d="M893.3 106.5q-1.3 0.9 -0.4 3.4 0.5 0.7 1.2 1.2 0.7 -1.5 2.8 -2.4 -1.1 -2.9 -0.2 -3.9 -1.5 -0.5 -1.5 2 -0.1 0.5 -2.9 -0.2 2.4 0.8 2.5 0 -0.2 0 0.3 2.5 -1.6 -0.6 -1.5 0.8 -0.5 -1.5 1.3 -2.1 -1 -2.3 0.1 -3 1.8 0.9 1.4 -1.1 -0.4 -0.2 1.6 0.6 1 1.3 -0.7 2.4" fill="none" stroke="#3a2a10" stroke-width="0.5" opacity="0.7"/><ellipse cx="935" cy="109" rx="4.5" ry="5.5" fill="#E5A838" filter="url(#gb)"/><path d="M933 109.3q1.7 -2.2 2.2 -2.9 -0.2 0.2 -2.1 1.4 0.6 2.8 -0.9 3.8 0.7 -2 2.3 -1.1 1.6 1.5 2.1 0.2 -1.6 -1.1 -2.4 -0.5 -0.2 0.4 -1.2 -1.6 2 -2.3 2.3 -2.2 -0.2 0.3 -0.3 2.5 -0.3 -0.2 -3.5 0.3 -0.4 -2 1.5 -2 2 1.6 1.1 2.3 -1.8 2.2 -0.8 1.7 2.3 0.5 2.3 -1" fill="none" stroke="#3a2a10" stroke-width="0.5" opacity="0.7"/><ellipse cx="952.8" cy="92.2" rx="4" ry="5" fill="#E5A838" filter="url(#gb)"/><path d="M951.3 90.7q-1.2 -0.6 -1.8 1.1 2.2 0.5 2.1 1.4 -0.6 -1.1 1.6 -1.9 -1 1.6 -1.8 1.8 2.1 -1.1 2.5 0.2 1.2 1 0.8 2 0.4 -1.2 0.1 -2.5 -1.3 1.5 -2.5 0.3 0.1 0.1 -0.1 -2.5 0.7 -1.4 1.8 -0.3 -0 -1.4 -2.4 -0.7 1.1 0.4 -0.5 2.4 1.9 -0.2 1.8 1.7 -1.1 0.6 -0.4 2.3" fill="none" stroke="#3a2a10" stroke-width="0.5" opacity="0.7"/><ellipse cx="913.8" cy="89.4" rx="3.1" ry="3.9" fill="#E5A838" filter="url(#gb)"/><path d="M914.7 87q-0.2 -0.1 -0.5 2.4 0.5 -1.7 2.4 -0.6 0 0.7 -2.4 -0.5 1 -0 0.7 2.4 0.6 -0.6 -1.5 -2 1 1.1 -0.1 2.5 -0.6 -1.1 1 -2.3 -0.5 -1.2 1.8 -0.7 -1.2 -0.7 -2.5 0.5 -2.3 0 -1.6 -1.4 -1.5 2.2 -0.7 2.4 1.2 0.1 2.3 -0.9 1.3 2.1 1.3 3.3 -1.9 -0.4 -1.2 -2.2" fill="none" stroke="#3a2a10" stroke-width="0.5" opacity="0.7"/><ellipse cx="963.9" cy="121.2" rx="4" ry="5" fill="#E5A838" filter="url(#gb)"/><path d="M962.7 119.1q-0.6 0.6 0.2 2.5 -1.7 2.2 -2.1 1.6 0.5 0.2 2.2 1.2 -1 -1.2 -0.2 -2.5 0 -2.2 0.7 -1.6 1.1 -0.5 1.7 -1.2 -1.5 -1.1 -2.3 -1.1 -1.7 2.2 -0.6 2.4 -0.1 0.8 2 1.5 -1 0.9 -2.5 -0.5 -1.5 -2.1 -0.3 -2.1 0.3 1.6 -0.2 2.5 2 0.2 2.5 0.3 1 0 0.6 1.6" fill="none" stroke="#3a2a10" stroke-width="0.5" opacity="0.7"/><ellipse cx="852.6" cy="140.1" rx="4" ry="5" fill="#E5A838" filter="url(#gb)"/><path d="M850.4 138.7q-0.4 1.2 -0 2.5 -0 -1.3 2.5 -0.5 1.1 -0.8 1.9 1.2 0 -1.8 -1 -2.3 -0.3 0.1 1.6 -2.1 0.1 2.2 0.5 2.4 -1.9 1.6 -2.1 0.5 -0.7 0.9 -1.6 -0.9 -0.2 0.8 -2.8 0.3 -0.7 -1 1.5 -2 0.5 -0.5 1.8 0.2 1.1 0.5 0.2 3.4 0.6 -1.1 1.9 -1.6 -1.9 -1.7 -2.4 -0.7" fill="none" stroke="#3a2a10" stroke-width="0.5" opacity="0.7"/><ellipse cx="960.6" cy="136.8" rx="4" ry="5" fill="#E5A838" filter="url(#gb)"/><path d="M958.6 138.9q0.2 -0.8 2.3 -0.9 -0.2 -0.4 -1.2 -3.3 0.2 0.1 3 -1.3 -2.4 2 -2.1 1.4 -1.8 0.7 -2.4 -0.1 0.9 0.7 1.5 2 1.2 1 -0.1 2 -1.5 -2.1 -0.9 -2.3 -0.6 -1.6 0.4 -1.7 0.7 0.9 1.9 1.6 -0.7 2.2 -0.1 1.7 0.1 0.4 -1.9 2.4 2.2 0.1 1.7 -1.8 1.3 1.7 1.3 0.9" fill="none" stroke="#3a2a10" stroke-width="0.5" opacity="0.7"/><ellipse cx="872.6" cy="155.7" rx="5" ry="6.2" fill="#E5A838" filter="url(#gb)"/><path d="M872.4 156.4q2.1 -0 2.1 -2.9 1 0.4 1.9 -0.3 1.1 1.4 0.6 3.1 -2.2 2.3 -2.7 2.1 -1.5 -0.1 -1.5 -1 0.3 -0.6 0.4 -1.6 -0.1 -1.2 2.8 -1.1 -1.3 -0.4 -2.4 0.8 -1.3 0 -1.4 2.9 -2 0.6 -2.5 0.2 -0.6 -1 -0.2 -1.6 2.3 -0.7 3.2 -1.5 1.4 -1.9 0.9 -2.1 2.4 -0.5 2 -0.9" fill="none" stroke="#3a2a10" stroke-width="0.5" opacity="0.7"/><ellipse cx="864.8" cy="199.2" rx="5" ry="6.2" fill="#E5A838" filter="url(#gb)"/><path d="M862.8 197q-0.1 0.1 0.3 1.8 -2.1 -0.2 -1.6 0.3 1.7 3 0.3 3.3 -0.3 -0.1 2.2 -1.3 0.1 -1 2.2 0.9 0.4 -1.7 -1.9 -1.6 -1.9 -1 -3.5 0.7 0.8 0.9 2.4 -0.6 2.5 -0.9 3.4 1 -0.3 0.5 -2.1 -1.4 0.1 -2.6 -0.5 -3.9 -0.5 0.3 2 -0.9 -0.6 0.9 1.7 3.4 -2 -0 -2.5 0.4" fill="none" stroke="#3a2a10" stroke-width="0.5" opacity="0.7"/><ellipse cx="859.2" cy="251.5" rx="5" ry="6.2" fill="#E5A838" filter="url(#gb)"/><path d="M859.2 254.8q1.2 -1.4 1.8 -1.7 -2.1 0.9 -2.5 0.3 -0.5 -1 -1.3 -0.9 -0.6 -2.3 1.2 -2.2 0.5 -0.3 2.6 -0 1.7 2.1 1.3 3.1 -1.4 -0 -2 -1.5 -1.3 0.1 -0.4 -2.1 2.5 -0.7 2 -1.5 -2.3 0.5 -2.2 1.2 -0.7 1.2 1.3 3.6 -0.3 3.2 -1.1 3.8 0.2 0.3 -1.3 -2.1 -0.8 -1.9 0.1 -3" fill="none" stroke="#3a2a10" stroke-width="0.5" opacity="0.7"/><ellipse cx="850.3" cy="303.8" rx="5.6" ry="6.8" fill="#E5A838" filter="url(#gb)"/><path d="M847.8 301.3q-2.4 -0.1 -1.9 0.7 2.1 0.4 2.5 0.5 1 1.3 1.8 1.7 0.1 0.9 0.7 3.2 1.2 0.1 2 1.1 -2.1 0.3 -2.4 -0.7 -1.2 -0.6 -2 -3.2 -2.3 -1.5 -2.6 -0.2 1.6 -0.4 2.5 -0.1 0.6 2.2 1.1 1.9 1.3 0.8 -0.3 3.5 -1.5 0 -0.3 -2.5 -0.4 -1.8 -2.7 -1.5 1.4 -0.2 0.8 -2.4" fill="none" stroke="#3a2a10" stroke-width="0.5" opacity="0.7"/><ellipse cx="939.4" cy="160.2" rx="5" ry="6.2" fill="#E5A838" filter="url(#gb)"/><path d="M937.4 158q-1.6 0.3 -1.6 -0.8 -1.2 2.3 0.3 2.5 0.6 -0.5 2.4 -0.6 0.8 1 2 2.5 -0.6 2.1 0.4 2.7 -1 -0.8 -1.8 0.7 -1 -0.2 -1.7 -0.5 0.1 0.2 -1.2 -1.2 0.1 0 0.9 -2.6 0 -0.9 -1.3 -3.8 1.7 0.2 0.9 2.3 0.4 0.6 1.6 -0.3 1.7 -1.9 1.5 -1.6 -1 -0.9 -0.6 -1.9" fill="none" stroke="#3a2a10" stroke-width="0.5" opacity="0.7"/><ellipse cx="941.6" cy="198" rx="4.9" ry="5.9" fill="#E5A838" filter="url(#gb)"/><path d="M940.6 194.5q2.6 -0.3 2.9 1.4 0 0.9 -0.7 2.7 -0.3 -1.4 -2.9 -0.4 1.1 -1.9 0.4 -2.4 2 0.1 2.4 0.4 1.5 -0.1 1 1.3 -1.8 -1.4 -2.5 0.2 -1.6 -0.6 -2.7 -1.3 0.8 -2.4 0.7 -1.9 0.2 -1.4 1.3 -1.2 1.3 0.3 1.8 0.8 -1.4 1.7 -0.3 2.5 -2 -1.5 -2.5 -0 0 -1.3 -0.8 -2.2" fill="none" stroke="#3a2a10" stroke-width="0.5" opacity="0.7"/><ellipse cx="949.4" cy="243.7" rx="4.9" ry="5.9" fill="#E5A838" filter="url(#gb)"/><path d="M952.1 245.5q-1.7 -0.7 -2.8 0.2 -0.5 1 -1.4 -0.7 -0.6 -0.9 -1.3 -2.7 0.3 -2 1.9 -1.3 -0.4 2.3 2.1 2.5 -1.1 0.5 -1.9 2.7 -1.2 1 -1.5 0.5 0.2 -1.4 0.1 -2.5 1.5 1.2 2.1 -0.3 -0.2 -1.4 1 -1.2 -1.5 -0.2 -2 -2.7 0.4 1.7 -0.3 2.5 2.1 0.5 2.1 1.4 -1.2 1.5 -0.7 2.2" fill="none" stroke="#3a2a10" stroke-width="0.5" opacity="0.7"/><ellipse cx="963.9" cy="309.4" rx="5.4" ry="6.6" fill="#E5A838" filter="url(#gb)"/><path d="M961.1 312.8q-0.9 -2.7 0.3 -2.5 1.6 -0.5 1.9 -2.4 2.1 0.6 2.3 -0.8 2 3 1.5 3.4 -1.6 1.9 -0.4 1.7 -1.4 -0.7 -3.6 -0.1 -2.3 -1.5 -2.7 -2 -0.6 -0.4 0.1 -2.1 1.6 -0.1 3.1 -2.3 0.9 1.5 2.2 1.3 -0.6 2.5 0.4 2.8 -0.8 -0.2 1.3 1.4 -1.2 0.6 -2.4 -0.5 0.3 -1.7 -1.4 -1.9" fill="none" stroke="#3a2a10" stroke-width="0.5" opacity="0.7"/><clipPath id="bun"><path d="M832 84C832 84 830.7 94.3 831 100C831.3 105.7 832.3 112.5 834 118C835.7 123.5 838.2 128.3 841 133C843.8 137.7 851 146 851 146C851 146 855.2 143 858 140C860.8 137 863.5 131.5 868 128C872.5 124.5 878.5 121.1 885 119C891.5 116.9 899.5 115.7 907 115.5C914.5 115.3 923.7 116.6 930 118C936.3 119.4 940.8 121.5 945 124C949.2 126.5 952.6 129.8 955 133C957.4 136.2 959.6 143 959.6 143C959.6 143 965.3 139.5 968 136C970.7 132.5 974.1 127.3 976 122C977.9 116.7 979 110.3 979.5 104C980 97.7 979 84 979 84C979 84 832 84 832 84Z"/></clipPath><g clip-path="url(#bun)" fill="none" stroke="#202020"><path d="M971.9 102.7a3.4 3.4 89 1 0 6.7 0a3.4 2.5 89 1 0 -6.7 0M921.6 89.3a5.7 5.8 141 1 0 11.3 0a5.7 5.5 141 1 0 -11.3 0M879.4 110.5a4.1 4.6 15 1 0 8.2 0a4.1 4.9 15 1 0 -8.2 0M828.4 97.6a3.6 4.1 90 1 0 7.1 0a3.6 3.5 90 1 0 -7.1 0M961.6 99.4a4.3 4 135 1 0 8.7 0a4.3 4 135 1 0 -8.7 0M925 107a3.8 2.6 151 1 0 7.6 0a3.8 2.5 151 1 0 -7.6 0M939.5 95.2a4.3 4.5 104 1 0 8.5 0a4.3 3.4 104 1 0 -8.5 0M896.6 142.4a3.5 2.5 54 1 0 6.9 0a3.5 2.4 54 1 0 -6.9 0M956.5 94.2a3.1 2.3 58 1 0 6.2 0a3.1 2.1 58 1 0 -6.2 0M849.8 105.7a3.3 3.9 131 1 0 6.5 0a3.3 2.9 131 1 0 -6.5 0M974.1 90.7a4 4.8 143 1 0 8.1 0a4 4.8 143 1 0 -8.1 0M890.8 96.9a5.1 3.4 37 1 0 10.1 0a5.1 2.9 37 1 0 -10.1 0M827.6 110.3a5.7 5.8 90 1 0 11.3 0a5.7 5.5 90 1 0 -11.3 0M895.4 93.4a4.9 4.1 133 1 0 9.8 0a4.9 4.4 133 1 0 -9.8 0M889.6 121.9a5.5 4.7 41 1 0 11 0a5.5 4.6 41 1 0 -11 0M960 135.1a5.3 5.9 122 1 0 10.6 0a5.3 5.6 122 1 0 -10.6 0M893.8 104.7a5 3.3 75 1 0 10 0a5 3.3 75 1 0 -10 0M935.8 125.6a3.5 3 81 1 0 7 0a3.5 2.8 81 1 0 -7 0M885.6 128.6a6.2 4.4 117 1 0 12.4 0a6.2 4.5 117 1 0 -12.4 0M882.2 116.3a6.4 4 97 1 0 12.8 0a6.4 3 97 1 0 -12.8 0M945.4 146.1a4.6 3 103 1 0 9.2 0a4.6 2.8 103 1 0 -9.2 0M934.8 117.8a5.1 5.5 93 1 0 10.1 0a5.1 4.8 93 1 0 -10.1 0M970.6 97.9a5.2 4.4 137 1 0 10.5 0a5.2 3.3 137 1 0 -10.5 0M978.9 107.5a2.7 2.1 71 1 0 5.5 0a2.7 1.5 71 1 0 -5.5 0M888 111.8a5.3 4.3 47 1 0 10.6 0a5.3 3.4 47 1 0 -10.6 0M939.1 146a4.6 3.4 144 1 0 9.2 0a4.6 2.9 144 1 0 -9.2 0M855.5 92.5a5.6 6.1 114 1 0 11.2 0a5.6 5.4 114 1 0 -11.2 0M909.3 98.9a6.4 5.2 114 1 0 12.7 0a6.4 5.3 114 1 0 -12.7 0M951.6 114.9a3.7 3.4 22 1 0 7.4 0a3.7 3.5 22 1 0 -7.4 0M879.8 140.1a3.6 2.9 45 1 0 7.1 0a3.6 2.6 45 1 0 -7.1 0M851.6 84.2a5.4 4.1 44 1 0 10.8 0a5.4 3.4 44 1 0 -10.8 0M897.8 112.3a5 5 65 1 0 10.1 0a5 5.4 65 1 0 -10.1 0M955.5 87.8a5.8 6.6 141 1 0 11.6 0a5.8 5 141 1 0 -11.6 0M955.1 125.8a2.6 1.6 171 1 0 5.1 0a2.6 1.5 171 1 0 -5.1 0M863.9 90.7a3.1 2.3 139 1 0 6.1 0a3.1 1.9 139 1 0 -6.1 0M846.2 143.7a5.7 4 160 1 0 11.3 0a5.7 3.7 160 1 0 -11.3 0M943.8 128.1a6.1 6.5 150 1 0 12.2 0a6.1 5.1 150 1 0 -12.2 0M930.6 119a5.5 4.7 158 1 0 10.9 0a5.5 4.4 158 1 0 -10.9 0M866.2 99.5a3.1 2.7 10 1 0 6.1 0a3.1 2.4 10 1 0 -6.1 0M846 116.4a4.5 4.2 155 1 0 9 0a4.5 2.9 155 1 0 -9 0M954.4 114.9a4.8 4.7 151 1 0 9.5 0a4.8 4 151 1 0 -9.5 0M890.5 147.4a2.8 2.8 114 1 0 5.6 0a2.8 2 114 1 0 -5.6 0M916.9 129.1a6.2 5 176 1 0 12.5 0a6.2 4.5 176 1 0 -12.5 0M901 143.2a2.6 2.7 112 1 0 5.3 0a2.6 2.3 112 1 0 -5.3 0M958 108.2a4.4 4 138 1 0 8.8 0a4.4 3.2 138 1 0 -8.8 0M891.2 111.9a4.7 5.2 52 1 0 9.4 0a4.7 5.3 52 1 0 -9.4 0M887.4 117.2a3.6 3.2 175 1 0 7.2 0a3.6 3.1 175 1 0 -7.2 0M947.8 105.8a3.8 2.9 105 1 0 7.5 0a3.8 2.8 105 1 0 -7.5 0M944.9 86.6a5.4 6.1 98 1 0 10.8 0a5.4 4.4 98 1 0 -10.8 0M871.6 84.4a3.3 3.8 109 1 0 6.5 0a3.3 3.6 109 1 0 -6.5 0M946.1 144a4.9 4.8 112 1 0 9.9 0a4.9 4.7 112 1 0 -9.9 0M917.7 128.9a3.4 3.4 82 1 0 6.7 0a3.4 3.4 82 1 0 -6.7 0M841.2 96a2.6 2.8 164 1 0 5.3 0a2.6 2.7 164 1 0 -5.3 0M879.9 138.3a5.6 5.3 46 1 0 11.3 0a5.6 4.3 46 1 0 -11.3 0M889.6 105a4.2 4.2 168 1 0 8.4 0a4.2 3 168 1 0 -8.4 0M913.6 86.6a3 3.2 103 1 0 6 0a3 3.4 103 1 0 -6 0M893.6 84.9a4 3.9 168 1 0 8.1 0a4 4.2 168 1 0 -8.1 0M899.3 111.2a2.9 2.9 38 1 0 5.8 0a2.9 2.2 38 1 0 -5.8 0M825.2 84.3a5.2 3.5 173 1 0 10.5 0a5.2 2.6 173 1 0 -10.5 0M961.1 92.5a2.6 2.7 43 1 0 5.1 0a2.6 2.6 43 1 0 -5.1 0M851.6 87.3a5.6 5.8 153 1 0 11.2 0a5.6 5.7 153 1 0 -11.2 0M835.8 125.5a5.3 4.7 167 1 0 10.7 0a5.3 3.7 167 1 0 -10.7 0M975.9 131.3a2.5 1.5 117 1 0 5.1 0a2.5 1.6 117 1 0 -5.1 0M835 104.5a5.4 3.8 154 1 0 10.8 0a5.4 3.4 154 1 0 -10.8 0M832.5 108.3a4.8 4.1 121 1 0 9.6 0a4.8 3.1 121 1 0 -9.6 0M947.3 108a5.1 5 75 1 0 10.2 0a5.1 4.2 75 1 0 -10.2 0M945 146.4a5.6 5.3 52 1 0 11.3 0a5.6 3.8 52 1 0 -11.3 0M974.1 130.4a5.8 4.6 109 1 0 11.6 0a5.8 5.1 109 1 0 -11.6 0M953.9 123.7a3.7 3.2 159 1 0 7.5 0a3.7 2.7 159 1 0 -7.5 0M928.7 123.7a6.1 6.6 50 1 0 12.2 0a6.1 4.6 50 1 0 -12.2 0M864.2 111.9a4.8 5.3 159 1 0 9.7 0a4.8 3.8 159 1 0 -9.7 0M952 137.6a6 5.6 49 1 0 11.9 0a6 5.9 49 1 0 -11.9 0M947.7 129.2a6.2 5 15 1 0 12.3 0a6.2 4.6 15 1 0 -12.3 0M946.9 97.2a5.5 6.4 42 1 0 11 0a5.5 6 42 1 0 -11 0M930.4 114.7a3.3 2.5 135 1 0 6.7 0a3.3 2.5 135 1 0 -6.7 0M894 89.8a5.7 6.1 41 1 0 11.5 0a5.7 5.7 41 1 0 -11.5 0M963.3 142.4a4.6 4.1 106 1 0 9.2 0a4.6 3.2 106 1 0 -9.2 0M852.7 95.9a5.3 4.3 101 1 0 10.6 0a5.3 3.7 101 1 0 -10.6 0M906 93.8a2.7 3.2 67 1 0 5.4 0a2.7 2.4 67 1 0 -5.4 0M923.6 136a3.1 3 62 1 0 6.2 0a3.1 2.7 62 1 0 -6.2 0M824.7 86.2a6.5 7.2 87 1 0 12.9 0a6.5 6.7 87 1 0 -12.9 0M864.6 135.4a4.2 4.9 138 1 0 8.4 0a4.2 5 138 1 0 -8.4 0M975.6 100.8a2.7 1.9 32 1 0 5.3 0a2.7 1.4 32 1 0 -5.3 0M830 120.8a6 5.2 170 1 0 12 0a6 5.6 170 1 0 -12 0M833.9 123.5a4.1 2.7 172 1 0 8.2 0a4.1 2.2 172 1 0 -8.2 0M909.7 126.3a6.3 6.3 70 1 0 12.7 0a6.3 5.6 70 1 0 -12.7 0M846.5 147.7a6.5 4.7 6 1 0 12.9 0a6.5 3.8 6 1 0 -12.9 0M876.8 143.6a6.1 6.7 8 1 0 12.2 0a6.1 6.8 8 1 0 -12.2 0M932.3 126.7a6.4 4.1 26 1 0 12.9 0a6.4 4.1 26 1 0 -12.9 0M970.8 128.7a3.7 3.5 136 1 0 7.4 0a3.7 2.6 136 1 0 -7.4 0M875.5 101a3 2.7 30 1 0 6 0a3 2.1 30 1 0 -6 0M847.8 128.7a2.6 2.6 35 1 0 5.1 0a2.6 1.9 35 1 0 -5.1 0M966.5 98.6a6.2 7 159 1 0 12.5 0a6.2 5.3 159 1 0 -12.5 0M891.6 90.4a6.2 6.9 113 1 0 12.4 0a6.2 6.1 113 1 0 -12.4 0M876.6 138.3a4.4 4.3 25 1 0 8.8 0a4.4 3.4 25 1 0 -8.8 0M832.1 131.1a4.7 3.2 156 1 0 9.4 0a4.7 2.6 156 1 0 -9.4 0M888.7 94.3a3.6 4 60 1 0 7.2 0a3.6 3 60 1 0 -7.2 0M898.5 105a6.1 4.1 176 1 0 12.2 0a6.1 3 176 1 0 -12.2 0M964.3 128.1a3.3 3 51 1 0 6.7 0a3.3 2.4 51 1 0 -6.7 0M853 108a6.5 7.7 166 1 0 12.9 0a6.5 5.7 166 1 0 -12.9 0M870.4 143.1a2.7 2.8 52 1 0 5.5 0a2.7 3.1 52 1 0 -5.5 0M826.6 137.3a3.9 2.6 0 1 0 7.7 0a3.9 2.7 0 1 0 -7.7 0M905.9 96.3a4.2 4.9 39 1 0 8.5 0a4.2 4.5 39 1 0 -8.5 0M844 95.9a5.6 5.7 35 1 0 11.2 0a5.6 4.2 35 1 0 -11.2 0M837.2 124.2a4.5 3.4 37 1 0 9 0a4.5 3.2 37 1 0 -9 0M933.6 137.6a4.8 3.5 11 1 0 9.7 0a4.8 3.5 11 1 0 -9.7 0M888.9 131.6a2.7 3 60 1 0 5.4 0a2.7 3.1 60 1 0 -5.4 0M960.3 116.5a2.6 2.9 85 1 0 5.1 0a2.6 3.1 85 1 0 -5.1 0M863.7 96.3a5.8 4.8 29 1 0 11.7 0a5.8 4.1 29 1 0 -11.7 0M916.2 84.3a4.6 4 92 1 0 9.2 0a4.6 3 92 1 0 -9.2 0M933.5 137.9a6 4.7 128 1 0 11.9 0a6 4 128 1 0 -11.9 0M939.2 88a6 7 89 1 0 12 0a6 6.4 89 1 0 -12 0M908.2 119.5a2.6 3 40 1 0 5.2 0a2.6 2.4 40 1 0 -5.2 0M838.2 100.5a5.8 3.6 17 1 0 11.5 0a5.8 3.5 17 1 0 -11.5 0M853.5 85.2a4.9 4.6 94 1 0 9.8 0a4.9 4.5 94 1 0 -9.8 0M838.7 141.4a5.4 3.4 22 1 0 10.7 0a5.4 3 22 1 0 -10.7 0M903.1 102.5a3 2.5 24 1 0 6 0a3 2.4 24 1 0 -6 0M957.5 93.7a4.8 5 29 1 0 9.6 0a4.8 5.2 29 1 0 -9.6 0M970.1 109.7a4.2 4.6 94 1 0 8.4 0a4.2 4 94 1 0 -8.4 0M971 135.3a3.9 2.9 60 1 0 7.7 0a3.9 2.5 60 1 0 -7.7 0M974.9 137.1a6.2 6.7 152 1 0 12.3 0a6.2 4.8 152 1 0 -12.3 0M902.5 147.2a6.2 4.7 75 1 0 12.5 0a6.2 4.5 75 1 0 -12.5 0M882.1 119a2.8 2.4 90 1 0 5.6 0a2.8 1.7 90 1 0 -5.6 0M844.1 148a5.6 6.5 113 1 0 11.2 0a5.6 6.7 113 1 0 -11.2 0M963.3 142.4a2.6 2.6 47 1 0 5.3 0a2.6 2.5 47 1 0 -5.3 0M864.5 119.8a6.2 6 45 1 0 12.4 0a6.2 5.5 45 1 0 -12.4 0M892 146.8a3.7 2.9 116 1 0 7.3 0a3.7 2.1 116 1 0 -7.3 0M916.2 147.1a4.6 3.5 83 1 0 9.1 0a4.6 3.2 83 1 0 -9.1 0M848.1 92.2a3 2.3 73 1 0 6.1 0a3 1.9 73 1 0 -6.1 0M861.3 89.8a4.7 5.2 109 1 0 9.4 0a4.7 4.8 109 1 0 -9.4 0M924.1 97.3a5.3 4.7 98 1 0 10.7 0a5.3 4.4 98 1 0 -10.7 0M897.7 104.5a3.5 2.5 92 1 0 6.9 0a3.5 2.2 92 1 0 -6.9 0M915.5 84.8a3.9 4.4 42 1 0 7.8 0a3.9 4 42 1 0 -7.8 0M898.2 102.8a6.5 5 138 1 0 12.9 0a6.5 3.8 138 1 0 -12.9 0M834.2 141.5a4.3 2.7 69 1 0 8.5 0a4.3 2.4 69 1 0 -8.5 0M939.3 91.2a3.4 4 132 1 0 6.8 0a3.4 3 132 1 0 -6.8 0M875.4 107.3a5.2 5 152 1 0 10.4 0a5.2 5.2 152 1 0 -10.4 0M903.3 132.8a5.5 5.8 85 1 0 10.9 0a5.5 5.9 85 1 0 -10.9 0M935.5 144.4a3 3.4 0 1 0 6 0a3 3.4 0 1 0 -6 0M913 116.9a6.4 6 75 1 0 12.7 0a6.4 6.1 75 1 0 -12.7 0M960.1 124.1a4 3.5 82 1 0 8 0a4 3.5 82 1 0 -8 0M869 109.8a4.7 3.9 57 1 0 9.4 0a4.7 4 57 1 0 -9.4 0M956.3 117a4.3 3 54 1 0 8.6 0a4.3 2.3 54 1 0 -8.6 0M914.9 122.4a2.9 3.3 58 1 0 5.7 0a2.9 3.4 58 1 0 -5.7 0M955.4 147.3a3.3 2.8 163 1 0 6.6 0a3.3 2 163 1 0 -6.6 0M830.9 121.3a4.5 5.2 139 1 0 9 0a4.5 4.7 139 1 0 -9 0M979.2 118.2a4.6 4.6 70 1 0 9.1 0a4.6 3.9 70 1 0 -9.1 0M914.5 107.2a6.3 6.3 94 1 0 12.6 0a6.3 4.7 94 1 0 -12.6 0M881.7 110.5a4.7 4.5 158 1 0 9.5 0a4.7 4.9 158 1 0 -9.5 0M898.9 113.1a5 6 61 1 0 10 0a5 5.5 61 1 0 -10 0M951.5 95.3a3.8 4.5 148 1 0 7.5 0a3.8 4.1 148 1 0 -7.5 0M840 143a5.3 5.7 178 1 0 10.5 0a5.3 6.1 178 1 0 -10.5 0M890 94.3a3.7 3.3 90 1 0 7.3 0a3.7 2.6 90 1 0 -7.3 0M851.5 125.6a4.9 4 178 1 0 9.8 0a4.9 3.8 178 1 0 -9.8 0M829 111.2a5.7 4.4 124 1 0 11.3 0a5.7 3.1 124 1 0 -11.3 0M870.7 139.6a4.8 4.8 35 1 0 9.7 0a4.8 4.4 35 1 0 -9.7 0M909.2 101.6a5.1 4.7 179 1 0 10.2 0a5.1 4.3 179 1 0 -10.2 0M889 92a3.1 3.3 19 1 0 6.3 0a3.1 2.4 19 1 0 -6.3 0M848.8 118.5a5.8 5.6 145 1 0 11.6 0a5.8 4.1 145 1 0 -11.6 0M826.2 134.9a3.8 3.9 63 1 0 7.6 0a3.8 3 63 1 0 -7.6 0M863.5 90.6a6.1 5.8 62 1 0 12.2 0a6.1 5.1 62 1 0 -12.2 0M882.1 87.6a6.1 5.8 172 1 0 12.1 0a6.1 5 172 1 0 -12.1 0M922.1 100.5a2.7 3.1 153 1 0 5.4 0a2.7 2.6 153 1 0 -5.4 0M964.5 137.8a3.7 3.6 172 1 0 7.4 0a3.7 3.2 172 1 0 -7.4 0M972.1 100a4.1 4.2 39 1 0 8.1 0a4.1 3.4 39 1 0 -8.1 0M958.9 116a5.7 4.2 31 1 0 11.3 0a5.7 3.6 31 1 0 -11.3 0M853.4 148.1a3.7 3.4 20 1 0 7.3 0a3.7 3.1 20 1 0 -7.3 0M885.4 110.6a2.8 1.9 148 1 0 5.5 0a2.8 1.6 148 1 0 -5.5 0M862.6 96.6a3.6 2.7 6 1 0 7.3 0a3.6 2.6 6 1 0 -7.3 0M875.9 94.3a5.3 3.5 48 1 0 10.6 0a5.3 3.6 48 1 0 -10.6 0M842.1 113.3a5.8 6.3 28 1 0 11.7 0a5.8 5.3 28 1 0 -11.7 0M934.4 108.9a6.3 4.6 171 1 0 12.7 0a6.3 4.1 171 1 0 -12.7 0M860.4 113.9a3 3.1 46 1 0 6 0a3 3.3 46 1 0 -6 0M916.2 108.3a3.5 3.4 38 1 0 7 0a3.5 3.5 38 1 0 -7 0M842.5 117.9a4.7 3.6 138 1 0 9.3 0a4.7 3 138 1 0 -9.3 0M926.8 121.5a3.7 3.1 15 1 0 7.5 0a3.7 2.4 15 1 0 -7.5 0M955.6 105.2a5.2 3.4 101 1 0 10.3 0a5.2 2.9 101 1 0 -10.3 0M903.3 103.6a2.8 2.2 40 1 0 5.5 0a2.8 1.6 40 1 0 -5.5 0M935.7 102.6a4.1 4.7 139 1 0 8.2 0a4.1 5 139 1 0 -8.2 0M958.8 92.7a3.6 2.2 122 1 0 7.2 0a3.6 2.2 122 1 0 -7.2 0M877.7 111.2a5.1 5.2 44 1 0 10.3 0a5.1 5.4 44 1 0 -10.3 0M879.7 125.5a3.2 2.2 164 1 0 6.5 0a3.2 2.1 164 1 0 -6.5 0M936.5 86.7a2.7 1.9 35 1 0 5.3 0a2.7 1.5 35 1 0 -5.3 0M883.7 86.6a3.7 3.7 32 1 0 7.5 0a3.7 3.8 32 1 0 -7.5 0M913.4 131.3a3.5 3 123 1 0 7 0a3.5 2.5 123 1 0 -7 0M822.5 139.1a5.6 4.3 7 1 0 11.2 0a5.6 4.5 7 1 0 -11.2 0M919.3 87.1a3.5 2.3 142 1 0 7 0a3.5 1.8 142 1 0 -7 0M967.8 133.5a2.8 2.9 70 1 0 5.7 0a2.8 2.9 70 1 0 -5.7 0M954.4 102.6a2.9 3.3 76 1 0 5.7 0a2.9 3.6 76 1 0 -5.7 0M930.1 132.7a5.8 5.7 81 1 0 11.6 0a5.8 4.1 81 1 0 -11.6 0M932.4 112.3a4.5 5.3 22 1 0 9.1 0a4.5 5.3 22 1 0 -9.1 0M829.1 130.4a5.7 4.3 98 1 0 11.4 0a5.7 4.7 98 1 0 -11.4 0M924 119.9a3.5 2.2 64 1 0 7 0a3.5 1.9 64 1 0 -7 0M856.4 104.5a3 3.1 120 1 0 6.1 0a3 2.5 120 1 0 -6.1 0M861.4 118a4.3 5 63 1 0 8.6 0a4.3 4.1 63 1 0 -8.6 0M961.3 93.4a4.8 3.8 146 1 0 9.5 0a4.8 3.5 146 1 0 -9.5 0M941.5 95.2a5.2 5 83 1 0 10.3 0a5.2 5 83 1 0 -10.3 0M954 91.6a3.7 3 37 1 0 7.3 0a3.7 2.2 37 1 0 -7.3 0M866.5 97a5.3 4.6 20 1 0 10.6 0a5.3 3.8 20 1 0 -10.6 0M897.9 108a3.2 2 1 1 0 6.3 0a3.2 2.2 1 1 0 -6.3 0M939.7 89.5a5.4 6.4 101 1 0 10.7 0a5.4 4.7 101 1 0 -10.7 0M901 112.7a3.3 3 1 1 0 6.5 0a3.3 3.2 1 1 0 -6.5 0M922.3 125.4a6.2 6.2 45 1 0 12.5 0a6.2 4.9 45 1 0 -12.5 0M844 85.8a5.6 6.2 53 1 0 11.2 0a5.6 4.8 53 1 0 -11.2 0M921.3 139.8a6.2 4.4 141 1 0 12.4 0a6.2 4.5 141 1 0 -12.4 0M940.6 105.6a3.2 3.5 57 1 0 6.5 0a3.2 3 57 1 0 -6.5 0M908.2 108.4a5.8 4.3 7 1 0 11.7 0a5.8 4 7 1 0 -11.7 0M920.7 138.1a5.3 6.1 170 1 0 10.6 0a5.3 5.5 170 1 0 -10.6 0M902.2 94.4a3.7 3.5 14 1 0 7.4 0a3.7 3.4 14 1 0 -7.4 0M847.1 113.3a6.4 4.2 7 1 0 12.8 0a6.4 3.7 7 1 0 -12.8 0M855.3 131.7a2.5 2.8 153 1 0 5 0a2.5 2.8 153 1 0 -5 0M889.2 102.7a5.1 4.7 75 1 0 10.3 0a5.1 3.9 75 1 0 -10.3 0M890.6 128a5.8 6.6 29 1 0 11.6 0a5.8 5.4 29 1 0 -11.6 0M893.2 121.2a3.9 2.8 15 1 0 7.8 0a3.9 2.3 15 1 0 -7.8 0M893.7 148.1a6.1 6.9 175 1 0 12.3 0a6.1 7.4 175 1 0 -12.3 0M922 137.5a2.7 2.8 109 1 0 5.5 0a2.7 2.3 109 1 0 -5.5 0M912.7 146.9a4.4 4.4 53 1 0 8.8 0a4.4 3.7 53 1 0 -8.8 0M962.8 85.8a3.3 3.3 80 1 0 6.5 0a3.3 2.4 80 1 0 -6.5 0M926.2 108.6a4.8 4.1 95 1 0 9.6 0a4.8 3.8 95 1 0 -9.6 0M886.6 91.5a3.2 3.7 98 1 0 6.4 0a3.2 2.7 98 1 0 -6.4 0M959.6 100.7a2.9 2.6 45 1 0 5.8 0a2.9 2.4 45 1 0 -5.8 0M909.6 99a4.8 3.2 92 1 0 9.6 0a4.8 3 92 1 0 -9.6 0M837.7 110.9a2.8 2.4 155 1 0 5.6 0a2.8 2.2 155 1 0 -5.6 0M936.5 134a3 3.5 129 1 0 5.9 0a3 2.6 129 1 0 -5.9 0M954.3 109.9a3.2 3.7 101 1 0 6.4 0a3.2 3.8 101 1 0 -6.4 0M846.6 135.2a2.7 2 67 1 0 5.5 0a2.7 1.4 67 1 0 -5.5 0M917 98.1a3.7 3.8 76 1 0 7.4 0a3.7 4 76 1 0 -7.4 0M920.2 141.6a4.8 5.5 156 1 0 9.5 0a4.8 4.2 156 1 0 -9.5 0M938.7 106.5a5.6 5.6 148 1 0 11.1 0a5.6 4.2 148 1 0 -11.1 0M879.9 132.7a6.3 6.5 7 1 0 12.6 0a6.3 6.1 7 1 0 -12.6 0M837.8 120.2a5.7 3.8 166 1 0 11.4 0a5.7 3.7 166 1 0 -11.4 0M863.4 96.7a4.3 4.7 104 1 0 8.6 0a4.3 3.5 104 1 0 -8.6 0M825.6 91.3a5.7 4.1 99 1 0 11.4 0a5.7 3.3 99 1 0 -11.4 0M932.1 109.1a3.1 3.5 96 1 0 6.2 0a3.1 3.4 96 1 0 -6.2 0M951.5 146.6a2.6 2.1 27 1 0 5.1 0a2.6 1.9 27 1 0 -5.1 0M961.6 136.8a2.6 1.9 147 1 0 5.3 0a2.6 1.8 147 1 0 -5.3 0M886.1 115.4a3.1 3.5 70 1 0 6.3 0a3.1 3.6 70 1 0 -6.3 0M919.5 89a3.8 2.8 160 1 0 7.6 0a3.8 2.6 160 1 0 -7.6 0M830.9 95.2a3.9 3.5 103 1 0 7.9 0a3.9 3 103 1 0 -7.9 0M878.4 84.4a4.8 3.9 3 1 0 9.6 0a4.8 3.4 3 1 0 -9.6 0M978.8 87a3.1 3.1 49 1 0 6.2 0a3.1 2.5 49 1 0 -6.2 0M901.2 101.3a4.8 4.4 172 1 0 9.6 0a4.8 4.8 172 1 0 -9.6 0M827.7 121a5.6 6.3 139 1 0 11.2 0a5.6 6 139 1 0 -11.2 0M923.4 108a3.6 3.9 157 1 0 7.3 0a3.6 4.2 157 1 0 -7.3 0M928.7 104.1a5.6 5.8 91 1 0 11.1 0a5.6 5.5 91 1 0 -11.1 0M878.5 120.3a4.1 2.6 60 1 0 8.2 0a4.1 2.2 60 1 0 -8.2 0M978.2 115.8a4 3 42 1 0 7.9 0a4 2.5 42 1 0 -7.9 0M843.2 84.5a6 5.2 80 1 0 12 0a6 4.8 80 1 0 -12 0M872.4 95.1a2.8 2.2 55 1 0 5.5 0a2.8 2.1 55 1 0 -5.5 0M910.1 145.9a3.9 4.5 105 1 0 7.7 0a3.9 3.3 105 1 0 -7.7 0M849.4 122.3a6.4 5.3 139 1 0 12.9 0a6.4 4.6 139 1 0 -12.9 0M959 88.5a4.4 5.1 49 1 0 8.9 0a4.4 4.1 49 1 0 -8.9 0M828 94.9a3.6 3.7 39 1 0 7.1 0a3.6 3.1 39 1 0 -7.1 0M853.3 123.8a6 5.9 35 1 0 11.9 0a6 5.9 35 1 0 -11.9 0M975.4 123.7a2.8 3.1 157 1 0 5.6 0a2.8 2.6 157 1 0 -5.6 0M844.7 96.4a4.6 5.2 115 1 0 9.3 0a4.6 5.6 115 1 0 -9.3 0M855.6 105.6a5.5 5.4 72 1 0 11 0a5.5 5.3 72 1 0 -11 0M876.5 87.8a4.2 2.6 112 1 0 8.3 0a4.2 2.2 112 1 0 -8.3 0M901.6 123.5a3.5 3.1 2 1 0 7.1 0a3.5 3.3 2 1 0 -7.1 0M913.3 149.2a2.7 2.6 130 1 0 5.4 0a2.7 2.2 130 1 0 -5.4 0M839.5 94.3a3.1 3.3 16 1 0 6.1 0a3.1 3.3 16 1 0 -6.1 0M889.2 119.6a4.9 4.5 118 1 0 9.7 0a4.9 4.3 118 1 0 -9.7 0M876.1 132.9a3.5 3.6 137 1 0 7.1 0a3.5 3.7 137 1 0 -7.1 0M869.8 135a6.4 5.6 50 1 0 12.8 0a6.4 5.1 50 1 0 -12.8 0M972.3 92.7a2.5 2.2 117 1 0 5.1 0a2.5 2.3 117 1 0 -5.1 0M881.1 149.3a3.4 3.6 16 1 0 6.8 0a3.4 2.6 16 1 0 -6.8 0M844.4 88a4.5 4.2 32 1 0 9 0a4.5 4.5 32 1 0 -9 0M881.8 93.9a3.2 3.3 165 1 0 6.4 0a3.2 2.6 165 1 0 -6.4 0M829.1 135.4a3.5 4.1 89 1 0 6.9 0a3.5 3.9 89 1 0 -6.9 0M877.4 136.8a4.3 3.4 162 1 0 8.7 0a4.3 2.6 162 1 0 -8.7 0M937.3 88.3a5.1 4.3 155 1 0 10.2 0a5.1 3.1 155 1 0 -10.2 0M909.8 111.1a6.2 7.2 112 1 0 12.4 0a6.2 5.7 112 1 0 -12.4 0M863.1 101.3a4.2 3.1 36 1 0 8.5 0a4.2 3.1 36 1 0 -8.5 0M921.8 103.7a6.5 4.7 102 1 0 13 0a6.5 3.6 102 1 0 -13 0M959.1 141.4a3.6 3.8 148 1 0 7.1 0a3.6 3 148 1 0 -7.1 0M873.7 116a6.1 4.2 122 1 0 12.1 0a6.1 4 122 1 0 -12.1 0M892.6 122.2a6 4.4 159 1 0 12.1 0a6 3.7 159 1 0 -12.1 0M946.4 141a3.2 3.6 179 1 0 6.5 0a3.2 3 179 1 0 -6.5 0M825.4 91.4a6.4 3.9 164 1 0 12.8 0a6.4 2.9 164 1 0 -12.8 0M939.6 90.4a3.2 3.2 16 1 0 6.3 0a3.2 2.7 16 1 0 -6.3 0M965.3 131.3a6 7.2 5 1 0 12.1 0a6 5.7 5 1 0 -12.1 0M948.9 129.5a2.7 2.4 41 1 0 5.3 0a2.7 2.1 41 1 0 -5.3 0M837.9 85.3a6.5 5.1 158 1 0 12.9 0a6.5 3.8 158 1 0 -12.9 0M899.8 93a4.2 3 123 1 0 8.4 0a4.2 2.3 123 1 0 -8.4 0M940.2 117a2.9 2.4 89 1 0 5.9 0a2.9 2.6 89 1 0 -5.9 0M876.1 98.2a6.4 7.2 131 1 0 12.7 0a6.4 5.8 131 1 0 -12.7 0M852.9 101.5a2.8 1.7 91 1 0 5.6 0a2.8 1.5 91 1 0 -5.6 0M912.3 107.9a2.5 2.6 117 1 0 5.1 0a2.5 2.4 117 1 0 -5.1 0M907.2 129.6a6.4 7.2 129 1 0 12.9 0a6.4 6.2 129 1 0 -12.9 0M871.3 111.7a6.4 5.3 69 1 0 12.8 0a6.4 4.6 69 1 0 -12.8 0M847.8 149.9a2.5 2.4 166 1 0 5 0a2.5 2 166 1 0 -5 0M919.8 108.9a3.5 2.5 20 1 0 6.9 0a3.5 2.6 20 1 0 -6.9 0M947.6 144a2.7 2.7 58 1 0 5.4 0a2.7 2.6 58 1 0 -5.4 0M907.2 104.8a6.4 3.8 134 1 0 12.8 0a6.4 4 134 1 0 -12.8 0M901.1 123.1a6.5 4.8 113 1 0 13 0a6.5 4.8 113 1 0 -13 0M883 131a4.1 3.7 110 1 0 8.1 0a4.1 3.6 110 1 0 -8.1 0M873.6 125.5a4.7 3.4 110 1 0 9.3 0a4.7 2.8 110 1 0 -9.3 0M964.4 115.2a5.4 4.9 85 1 0 10.8 0a5.4 3.9 85 1 0 -10.8 0M845.6 145.2a4.6 4.2 94 1 0 9.2 0a4.6 4.3 94 1 0 -9.2 0M859.4 95.4a5.8 5.1 115 1 0 11.6 0a5.8 5.2 115 1 0 -11.6 0M964.8 141.3a2.7 2.2 149 1 0 5.3 0a2.7 2.3 149 1 0 -5.3 0M843.7 94.2a3.5 2.3 64 1 0 7 0a3.5 2.4 64 1 0 -7 0M906.5 113.9a2.9 2.4 179 1 0 5.7 0a2.9 2.3 179 1 0 -5.7 0M892.4 115.6a5.7 6 26 1 0 11.4 0a5.7 5.8 26 1 0 -11.4 0M881.8 118.4a3.5 2.8 61 1 0 6.9 0a3.5 2.4 61 1 0 -6.9 0M826 97.3a4.8 3 32 1 0 9.6 0a4.8 3 32 1 0 -9.6 0M867.4 105.4a3.5 3.8 16 1 0 6.9 0a3.5 3.6 16 1 0 -6.9 0M957.8 97.3a4.2 4.5 111 1 0 8.4 0a4.2 3.8 111 1 0 -8.4 0M830.9 113.2a4 4.1 53 1 0 7.9 0a4 3.5 53 1 0 -7.9 0M925.2 137.5a3.9 3.2 104 1 0 7.8 0a3.9 3.5 104 1 0 -7.8 0M852.5 148.1a5.3 4.4 119 1 0 10.7 0a5.3 3.7 119 1 0 -10.7 0M835 133.9a4 3.7 89 1 0 8 0a4 3.9 89 1 0 -8 0M941.2 85.7a4.9 4.3 83 1 0 9.7 0a4.9 4.4 83 1 0 -9.7 0M886.7 115.3a6.1 5.2 88 1 0 12.1 0a6.1 4.7 88 1 0 -12.1 0M951.2 128.2a5.5 4.6 7 1 0 10.9 0a5.5 4.5 7 1 0 -10.9 0M908.8 134.8a5.6 3.7 39 1 0 11.2 0a5.6 2.7 39 1 0 -11.2 0M952.7 90.7a2.9 3 101 1 0 5.7 0a2.9 2.2 101 1 0 -5.7 0M929.8 130.9a4.4 2.8 124 1 0 8.9 0a4.4 2.4 124 1 0 -8.9 0M913.3 149.9a5.8 6.5 26 1 0 11.5 0a5.8 5.4 26 1 0 -11.5 0M902.4 84.4a6.5 4.9 47 1 0 12.9 0a6.5 4.1 47 1 0 -12.9 0M863.1 140.7a4.7 4.3 75 1 0 9.4 0a4.7 3.1 75 1 0 -9.4 0M869.8 141.2a5.7 6.4 46 1 0 11.4 0a5.7 5 46 1 0 -11.4 0M832.1 119.4a4 3.5 88 1 0 8 0a4 3.3 88 1 0 -8 0M881.8 136.9a3.3 3.8 100 1 0 6.6 0a3.3 2.7 100 1 0 -6.6 0M872.9 119.2a4.1 3.9 58 1 0 8.3 0a4.1 3.1 58 1 0 -8.3 0M946.8 103.2a5.3 5.8 106 1 0 10.7 0a5.3 5.1 106 1 0 -10.7 0M967.8 113.4a6 3.8 78 1 0 12 0a6 3.6 78 1 0 -12 0M832.9 140.9a2.8 2.7 32 1 0 5.6 0a2.8 2.9 32 1 0 -5.6 0M911 136.8a4.5 4.5 121 1 0 9 0a4.5 3.7 121 1 0 -9 0M857.8 139.3a3.1 3.5 37 1 0 6.2 0a3.1 2.6 37 1 0 -6.2 0" stroke-width="0.7" opacity="0.9"/><path d="M862.9 122.3q5.8 3.4 4.8 3.6 -2.7 7.2 2.3 8.8 2.6 -5.7 4.3 -5.5 1.3 5.3 8.4 5.6 -2.3 3 -2.5 3.7 -2.7 2.5 -4.7 1.1 0.9 -4.9 -3.7 -3.4 1 -3.5 5.5 -4.4 0.8 3.1 8.5 6.5 -2.7 -5.4 0.6 -7 0.7 -4.4 -5.7 -1 1.9 4.1 -3.6 5.5 -5.5 3.6 -6.7 3.1 -6.7 -0.3 -6.1 -1.6 -2.3 -4 -6.3 -7.4 0.8 -5.5 -0.8 -4.8 4.2 -4.7 5.6 -3.8 3.8 0 1.8 -6.3 5.5 -3.8 4.7 -1.2 1.5 -1 3.5 3.6 -3.6 2.4 -2 6.5 0.6 1.5 -5 3 -3.3 -1.9 -6.4 -8.7 3.5 -5.5 2.8 -5.1 3.5 -2.7 6.7 -2 -0.7 4.6 3 7.7 -4.1 2.1 -3.9 2.6 -0.7 -0.9 -4.6 -7.2 -0.2 -4.6 -7.4 -0.9 -3.2 -5.7 0.6 -7 1.3 -3.5 5.2 -0.9 6.8 5.8 5.6 3.3 1.1 7.1 -2.6 7.2 -1.7 2.6 -5.6 -0.5 -1.8 -7.4 -1 -9.2 1.6 2.2 9.4 -1.1 2.4 -2.2 -0.7 -9.4 6.8 0.7 8.8 -4.8 4.7 -7.1 1.9 -7.7 5.7 -1.6 5.8 1.4 1.6 5.8 3.4 4.8 0.3 5.3 -4.1 5.6 2.1 0.6 5.8 8.2 4 2 6.4 -1.7 -2.4 0.1 3.4 6.8 -3.7 1.1 -6.8 5 -4 -2.2 -10.1 -1 -4 -1.6 -7 -5.8 -1.7 -1.2 4.4 -7.8 4 -4.2 10.2 -3.8 1.4 4.7 4.5 9.4 -7.6 5.3 -9.9 5 -4.8 3.3 -4.1 -0.9 -3.3 -1.2 -4.2 4.2 0.2 7.3 2.5 7.4 -1.1 0.5 -4.3 1.9 -0.7 -5.1 -3.7 -8 3.1 -5.4 6.3 -8.4 5.6 3.5 8 6 1.6 7.3 -0.7 10.4 2.3 5.4 -2.9 4.2 -7.7 0.3 -7.9 2.5 0.6 -4.4 -3.2 -5.2 4.1 -2.2 5.7 -9.5 7.1 2.8 10.7 2.4 4.9 6 4.3 7 1.9 0.9 -2.6 7.4 -6.9 -1.9 -6.4 -0.5 -6.3 2.5 -7.3 8.2 -3 -5.3 -5 -4.1 3.6 -5.4 -0.6 -6.9 0.2 -1.4 -5.4 -5 3.5 -2.5 2.7 -4.5 2.8 -0.8 9.4 0.8 1 1.1 -0.1 6.2 -4.3 -0.2 -9.8 2 -4.3 -2.5 -1.4 -5.7 5.7 -4.9 6.3 -3.3 6.3 3.5 10.3 3.9 1.3 4 -1.5 10.7 -0.3 5.5 4.7 4.7 -0 -3 6.1 -3.4 6.8 1.7 7.7 0.5 -0.4 6.7 2.9 7.7 4 1.7 5.2 -0.8 3.9 -2.2 3.7 -9.8 -0.2 0 -3.9 -3.4 1.6 0.5 1.5 -4.4 -0.8 0.2 5.2 -2.5 0.2 -6.6 -2.9 -6 2.8 -4.2 3.5 -2.4 4 3.3 7.2 1.5 0 0.3 4.7 -1.7 1.2 4.5 7 4.2 5.1 -4.9 9.7 -1.9 0.9 -0.1 3.1 7.1 -3.8 3 -5.8 5.9 -0.6 0.8 -9.6 -3.6 -1.7 -5.4 3.7 -10.5 5.5 -2.8 7.5 -4.9 1.5 -1.5 6.7 2 -2.7 5.3 -0.3 7.3 -1.1 6.9 -5.5 5.9 4.7 6.3 5.8 9 3.1 4 0 4.3 -5.9 2.3 -6.2 2.5 -3.5 -3.3 -1.6 -4.2 -6.9 -2.3 -7.1 2 0.7 2 -6.9 -2.9 -2.2 -8.2 1.9 -9.8 0.7 -4.7 5.5 -1.4 5.8 4.6 3.5 10.2 -1.2 -0.3 -8.2 5.5 -5.2 -3.8 -8.3 0.6 -4.7 -0.4 -1.7 -7.2 3.5 1.1 4.9 -4.3 0.5 4.3 5.4 1.7 -1.8 1.4 2.7 7.9 -1.3 -7 -1.6 -6.8 2.4 -0.4 6.6 -3.6 4.7 2.8 6.2 6.1 0.5 -1.7 8.3 1 0.8 -1.8 -3.7 -5.9 5.7 0.8 3.3 -3.5 6.4 -3.2 5.7 -1.6 3.8 -6.3 0.5 -8.7 -0.2 0.4 6.3 -7.1 1.6 2.2 8.9 4.1 6.1 0.3 5.2 9 -3.9 4 -7.9 6.1 -5.8 -0.8 -4.2 -2.3 1.5 -6.1 -1.1 -4.1 -6.9 1.6 -7.4 0.7 2 -1.1 -4 -2.9 2.7 -1.7 -0.5 -9.3 3.9 -5.6 3.4 -5.3 -6.9 -7.5 -5.4 -7.9 0.3 -4.6 0.2 -8.4 7.1 -0.5 7.2 -5 -7.2 2.8 -6.5 2.6 2 2.6 -3.4 6.1 -4.4 -2.1 -6.2 -1.3 -2.5 -0.4 -7.6 -8 -2.7 0.9 -9.6 5.6 -4.4 2.7 -4.2 -1.1 3.2 -1.4 1.8 -9.4 5.2 -1.6 4.9 -0 5.4 0.8 3 7.4 1.1 2.3 -5.1 6.1 -7.9 -5.6 -8.9 -6.5 -4.1 2.2 -4.2 0.8 1 -2 -1.2 -7.2 0.7 -5.2 5.4 -2.4 5.9 3.4 4 4.5 -0.1 2.2 -3.4 7.7 -3 -1.8 -3.6 2.4 -3.9 -2.1 -11 -0.5 -2.1 -3.2 -0.9 -4.8 0.7 1.4 8.2 -4.4 3.2 -4.5 0.9 -4.3 -6.1 -5.6 -8.4 -2.9 -1.1 1.7 -4.9 2 6.7 1.4 5.2 4.7 -4.7 -1.4 -2.1 5.4 -6.5 0.5 -10.6 -2.6 -3 -2.1 -3.7 -4.7 1.4 4.8 4.8 5.1 -0.9 1.7 0.1 5.7 -8.6 3.3 -9.6 3.8 -1.6 -5.1 -2.2 -3.8 -2.1 -2.3 2.2 -4.3 0.1 -5.1 6.7 -2.9 5.2 -1.1 9.5 5.1 4.4 7.7 2.7 7.7 -4.6 0.2 -9.7 4.8 -4.7 0.6 -2.3 5.2 -7.9 -2.1 -8.7 -3.4 -2.7 -7.3 -3.1 -8.3 -1.5 0.4 5.1 -1.8 4.8 2.8 5.6 5 1.6 1.2 0.7 8.4 7.7 -0.7 9.3 0.9 0.8 6.3 -0.1 5.8 -1.8 -1.2 -2.6 3.6 -0.3 0.2 -8 2 -5.2 -4.7 -5.9 -9.1 0.3 1.3 -7.6 0.5 2.2 1.7 -3.9 4 -0.8 1.9 -0.1 6.5 -6.1 3.8 -6.5 2.1 -3.3 -0 -5.9 -1.1 -3.5 0.9 -0.6 -5.9 2.8 -0.1 4.2 -6.7 3.1 -1.6 4.8 -2.3 3.8 -0.5 1.5 -8.7 -5.8 0.6 -4.1 -5.7 -1.8 0.8 -0.1 -6.2 6.9 2.1 7.8 -1 -1 3.6 2.3 4.5 9.1 -2.8 10.5 -0.5 0.6 -0.8 6.6 -4.8 3.5 2 6.7 1 3 4.3 6.4 5.7 -0.4 5 -3.9 6.5 -3 -3.2 -10.7 -2 -2.7 5.9 -4 4 -4.8 -1.6 -7.2 -6 -1.1 -4.5 2.6 -5.1 2.3 -5.4 6 -3.8 -1.8 -2.4 -1.1 -8.2 4.4 -1 5.9 3.8 7.3 -0.4 9 -3.2 1 6.4 7.2 8.3 0.3 7.9 -1.2 9.9 -6.9 0.3 -5.6 -0.1 -4.8 -5 -1.2 -4.5 0.5 0.2 4.9 -3.1 5 6.1 2.6 4.3 -1.9 3.2 -0.9 7.8 -5.6 -1.9 -4.2 1.9 -6.5 1.7 -9 -1.5 -3 -0.2 -0.8 -7.6 3.9 -2.4 4.5 -2.8 6.2 -0.1 7.3 6.5 1.2 6.8 -2.8 8.7 -3.3 -0.9 -7.7 4.3 -1.3 -2.7 -4.9 -1 -0.3 -7.2 -4.4 -6.6 3.2 -0.8 4.1 -4.7 -2.8 -1.2 -2.5 -5 3.2 0 1.8 -5.5 -5.6 -4.3 -8 -5.6 -0.7 1.7 6.3 3.1 4.7 -3.6 10.1 -2.1 2.4 3.5 7.1 3.3 -3.5 1.5 0.3 4.9 -6 1 -7.3 5 -5.4 -2.4 -8.7 -4 -5.3 3.4 -3.9 7.6 1.8 3.2 -4.4 -0.5 -4.8 -6.5 -6.3 -5.8 -1.7 -4.1 3.5 -6.4 -2 -0 -0.5 -4.5 3.5 4.2 6.4 2.9 1.5 2.9 4.3 8.5 -4.2 3.4 -1.9 10.8 4.6 6 9.6 4.4 1.7 5.7 -0.2 7.5 -6.7 6.9 -6.7 8.6 -3.2 4.2 -6 0.2 -5.2 4.1 -4.9 4.1 -0.8 2.4 -7 -1.3 -0.3 -1.3 -2.5 -9.2 7.5 -3.4 9.7 -2.8 1.7 -1.3 5.4 3.9 4.6 2.8 7 -0.9 4.5 9.1 3.9 9.9 -6 4.3 -7.9 5.9 0.3 1.2 -0.1 5.1 -2.1 4 -10 1.6 4.3 -5.6 6 -3.5 0.9 5.3 4.4 5.9 1.2 -3.3 5.2 -2.4 4.6 -1.9 4.3 0.8 -0.9 -4.3 -1.2 -6.9 -2.1 3.3 -6.4 -0.1 -4.1 7.1 -5 7.9 -1.4 -0.4 -8.2 -1.1 -0.7 -7.2 -4.1 -9.5 4.2 -8 5.1 -9.6 3.2 3.5 7.6 3.4 3.4 6.3 1.4 7.7 -0.6 1.2 -6.2 7.1 3.4 0.5 3.3 -6.2 5 -3.8 6.1 -2.2 0.3 6.9 6.5 6 -6.1 6.9 -6.9 7 -6 2 -9.8 -3.2 1.4 0 -3.9 -6.7 5.1 -5.8 9.2 -5.6 0.2 -5.6 -1.2 -7.1 2 -6.6 4.6 -6.3 6.3 -4.1 8.4 -3.9 3.4 4.3 5.1 1.9 4.3 5.8 4.4 8.1 0 -0.2 -7.1 7.2 -5.4 0.9 -3.5 -3.3 2.7 0.8 3 -6.8 0.3 -3.7 5.7 -1.6 -0.4 -0.4 4.9 3.9 1 0.4 1.9 6.1 -3.8 7.9 -7.3 8.3 -7.1 -3.5 -8.2 -1.4 -4.8 -5 -8 -7.5 -0.2 -7.4 1.3 -8.9 5.1 2 4.2 0.1 2.4 3.7 6.5 8.5 1.2 8.1 -1.5 8.7 -1.3 4.2 -7.5 6.8 -4.3 -3.5 -9.4 -5.3" stroke-width="0.5" opacity="0.8"/></g><path d="M832 84C831.8 86.7 830.7 94.3 831 100C831.3 105.7 832.3 112.5 834 118C835.7 123.5 838.2 128.3 841 133C843.8 137.7 849.3 143.8 851 146" fill="none" stroke="#202020" stroke-width="0.6" opacity="0.7"/><path d="M959.6 143C961 141.8 965.3 139.5 968 136C970.7 132.5 974.1 127.3 976 122C977.9 116.7 979 110.3 979.5 104C980 97.7 979.1 87.3 979 84" fill="none" stroke="#202020" stroke-width="0.6" opacity="0.7"/><path d="M883.2 124.5a2.2 2.2 31 1 0 4.5 0a2.2 2.2 31 1 0 -4.5 0M880.6 128.4a2 2.5 -0.4 1 0 4 0a2 2.5 -0.4 1 0 -4 0M877.7 132.3a2.5 3.3 3.3 1 0 5 0a2.5 3.3 3.3 1 0 -5 0M874.8 136.2a3.3 2.9 -17.3 1 0 6.6 0a3.3 2.9 -17.3 1 0 -6.6 0M873.9 140.1a2.5 2.9 -24.7 1 0 5.1 0a2.5 2.9 -24.7 1 0 -5.1 0M871.5 144a2.5 2.5 42.6 1 0 5 0a2.5 2.5 42.6 1 0 -5 0M869.6 147.9a2.8 2.4 33.2 1 0 5.5 0a2.8 2.4 33.2 1 0 -5.5 0M868 151.8a2.2 3 -31.6 1 0 4.4 0a2.2 3 -31.6 1 0 -4.4 0M866.6 155.7a2.1 3.1 -28.1 1 0 4.1 0a2.1 3.1 -28.1 1 0 -4.1 0M867 159.4a2.1 2.4 22.7 1 0 4.1 0a2.1 2.4 22.7 1 0 -4.1 0M864.9 163.1a3.3 3.3 43.5 1 0 6.6 0a3.3 3.3 43.5 1 0 -6.6 0M865.4 166.9a2.1 3.3 -31.7 1 0 4.2 0a2.1 3.3 -31.7 1 0 -4.2 0M863.8 170.6a3.1 3.2 -42 1 0 6.1 0a3.1 3.2 -42 1 0 -6.1 0M863.4 174.3a3.2 3.1 49.2 1 0 6.5 0a3.2 3.1 49.2 1 0 -6.5 0M863.3 178a2 2.1 -49.3 1 0 4.1 0a2 2.1 -49.3 1 0 -4.1 0M862.1 182.2a3 2.9 -34.9 1 0 6 0a3 2.9 -34.9 1 0 -6 0M863.5 186.5a2.2 2.9 48.4 1 0 4.5 0a2.2 2.9 48.4 1 0 -4.5 0M862.7 190.7a2.5 3.4 -11.3 1 0 5 0a2.5 3.4 -11.3 1 0 -5 0M863.4 194.9a2.3 2.3 51 1 0 4.7 0a2.3 2.3 51 1 0 -4.7 0M861.3 199.2a3 2.2 -35.9 1 0 6 0a3 2.2 -35.9 1 0 -6 0M861.3 202.8a2.5 3 3.1 1 0 5 0a2.5 3 3.1 1 0 -5 0M861.1 206.5a3 2 30 1 0 5.9 0a3 2 30 1 0 -5.9 0M861.7 210.1a2.8 2.6 10.4 1 0 5.6 0a2.8 2.6 10.4 1 0 -5.6 0M861.8 213.8a2.5 2.6 37.1 1 0 4.9 0a2.5 2.6 37.1 1 0 -4.9 0M859.4 217.4a3.3 2.8 -33.5 1 0 6.6 0a3.3 2.8 -33.5 1 0 -6.6 0M859.6 221.1a2.5 3 31.2 1 0 5.1 0a2.5 3 31.2 1 0 -5.1 0M858.7 224.8a3.1 2.7 30.7 1 0 6.2 0a3.1 2.7 30.7 1 0 -6.2 0M859.6 228.6a2.6 2.9 23.6 1 0 5.2 0a2.6 2.9 23.6 1 0 -5.2 0M859.8 232.4a2.6 3.3 44.2 1 0 5.1 0a2.6 3.3 44.2 1 0 -5.1 0M858.1 236.2a2.9 2.4 -23.8 1 0 5.7 0a2.9 2.4 -23.8 1 0 -5.7 0M857.9 240a3.3 3.1 33.1 1 0 6.6 0a3.3 3.1 33.1 1 0 -6.6 0M856.5 243.9a3.4 3 26.6 1 0 6.8 0a3.4 3 26.6 1 0 -6.8 0M856.8 247.7a2.4 2.9 36.9 1 0 4.7 0a2.4 2.9 36.9 1 0 -4.7 0M857.2 251.5a2.7 2.4 -43 1 0 5.4 0a2.7 2.4 -43 1 0 -5.4 0M854.6 255.6a3.3 3.1 26.9 1 0 6.6 0a3.3 3.1 26.9 1 0 -6.6 0M855.1 259.7a2.8 3.3 -7.5 1 0 5.6 0a2.8 3.3 -7.5 1 0 -5.6 0M854.1 263.7a3.3 2.1 -41 1 0 6.6 0a3.3 2.1 -41 1 0 -6.6 0M854.5 267.8a2.4 2.2 -6 1 0 4.8 0a2.4 2.2 -6 1 0 -4.8 0M852.9 271.9a3 2.4 15.3 1 0 6.1 0a3 2.4 15.3 1 0 -6.1 0M853 276a2.1 2.7 -29.4 1 0 4.2 0a2.1 2.7 -29.4 1 0 -4.2 0M851 280a2.9 2.4 43.3 1 0 5.8 0a2.9 2.4 43.3 1 0 -5.8 0M850.1 283.9a3.3 3.4 7.4 1 0 6.7 0a3.3 3.4 7.4 1 0 -6.7 0M849.7 287.9a3.1 3.1 37.5 1 0 6.3 0a3.1 3.1 37.5 1 0 -6.3 0M849.6 291.9a2.6 3.3 -39.3 1 0 5.1 0a2.6 3.3 -39.3 1 0 -5.1 0M848.8 295.9a3.1 2.2 -46 1 0 6.1 0a3.1 2.2 -46 1 0 -6.1 0M848 299.9a3.4 2.8 -38 1 0 6.8 0a3.4 2.8 -38 1 0 -6.8 0M847 303.8a2.9 2.5 32.5 1 0 5.8 0a2.9 2.5 32.5 1 0 -5.8 0M847.4 307.8a2 2.7 36.2 1 0 4.1 0a2 2.7 36.2 1 0 -4.1 0M846.6 311.8a3.3 2 -3.2 1 0 6.5 0a3.3 2 -3.2 1 0 -6.5 0M846.4 315.8a3 3 44.6 1 0 6 0a3 3 44.6 1 0 -6 0M847.7 319.7a2.2 2.2 -39.2 1 0 4.5 0a2.2 2.2 -39.2 1 0 -4.5 0M846.7 323.7a2.2 2.7 -34.7 1 0 4.5 0a2.2 2.7 -34.7 1 0 -4.5 0M846.1 327.7a3.3 2.7 -25.8 1 0 6.6 0a3.3 2.7 -25.8 1 0 -6.6 0" fill="none" stroke="#1a1a1a" stroke-width="0.55" opacity="0.9"/><path d="M929 122.3a3.3 2.3 11.6 1 0 6.6 0a3.3 2.3 11.6 1 0 -6.6 0M929.3 125.9a3.4 3.1 3.4 1 0 6.8 0a3.4 3.1 3.4 1 0 -6.8 0M929.6 129.4a3.2 2.6 42.7 1 0 6.4 0a3.2 2.6 42.7 1 0 -6.4 0M931.5 133a3.1 3 -27.6 1 0 6.3 0a3.1 3 -27.6 1 0 -6.3 0M933.3 136.6a2.6 3.2 43.6 1 0 5.3 0a2.6 3.2 43.6 1 0 -5.3 0M934 140.1a2.2 3 -9.8 1 0 4.4 0a2.2 3 -9.8 1 0 -4.4 0M934.5 144.1a2.2 2.2 -0.7 1 0 4.4 0a2.2 2.2 -0.7 1 0 -4.4 0M935.1 148.2a2.4 2.5 27 1 0 4.7 0a2.4 2.5 27 1 0 -4.7 0M935.9 152.2a2.8 2.2 -13.6 1 0 5.7 0a2.8 2.2 -13.6 1 0 -5.7 0M934.8 156.2a3.4 3.4 8.5 1 0 6.7 0a3.4 3.4 8.5 1 0 -6.7 0M936.1 160.2a3.4 2.5 -19.2 1 0 6.7 0a3.4 2.5 -19.2 1 0 -6.7 0M937.1 164.2a2 2.3 -22.3 1 0 4 0a2 2.3 -22.3 1 0 -4 0M937.9 168.2a2.9 2.8 19.1 1 0 5.8 0a2.9 2.8 19.1 1 0 -5.8 0M938.1 172.2a2.5 3.3 4.5 1 0 5 0a2.5 3.3 4.5 1 0 -5 0M937.2 176.2a3.2 2.9 10.8 1 0 6.4 0a3.2 2.9 10.8 1 0 -6.4 0M938.2 180.2a2.4 3.4 48.8 1 0 4.8 0a2.4 3.4 48.8 1 0 -4.8 0M939.2 184.7a2.1 2 -30.3 1 0 4.1 0a2.1 2 -30.3 1 0 -4.1 0M939.1 189.1a2.7 2.2 17.4 1 0 5.4 0a2.7 2.2 17.4 1 0 -5.4 0M939.3 193.6a3 3.3 18.4 1 0 5.9 0a3 3.3 18.4 1 0 -5.9 0M937.9 198a3 2 -7.6 1 0 6 0a3 2 -7.6 1 0 -6 0M938.9 202.1a3.4 2.4 -50.7 1 0 6.8 0a3.4 2.4 -50.7 1 0 -6.8 0M940.3 206.2a2.6 3.3 33.5 1 0 5.2 0a2.6 3.3 33.5 1 0 -5.2 0M940.8 210.3a2 2.3 34.3 1 0 4 0a2 2.3 34.3 1 0 -4 0M941.4 214.4a2.1 3.3 39.2 1 0 4.3 0a2.1 3.3 39.2 1 0 -4.3 0M942.5 218.5a2.7 2.5 -9.8 1 0 5.4 0a2.7 2.5 -9.8 1 0 -5.4 0M942.5 222.5a3 2.1 49.6 1 0 6 0a3 2.1 49.6 1 0 -6 0M943.2 226.1a2.1 3 -36.3 1 0 4.3 0a2.1 3 -36.3 1 0 -4.3 0M944.7 229.6a2.5 2.9 50.9 1 0 5 0a2.5 2.9 50.9 1 0 -5 0M944.1 233.1a3.4 2.9 -34.9 1 0 6.8 0a3.4 2.9 -34.9 1 0 -6.8 0M944.7 236.6a3 2.8 41.3 1 0 6.1 0a3 2.8 41.3 1 0 -6.1 0M945.8 240.2a2.3 2.2 -36.2 1 0 4.7 0a2.3 2.2 -36.2 1 0 -4.7 0M946.1 243.7a2.8 3.1 0.3 1 0 5.7 0a2.8 3.1 0.3 1 0 -5.7 0M947.4 247.2a2.8 2.8 4.5 1 0 5.6 0a2.8 2.8 4.5 1 0 -5.6 0M949.2 250.7a2 2.1 -27.1 1 0 4 0a2 2.1 -27.1 1 0 -4 0M949.7 254.3a3.1 2.3 -26.7 1 0 6.1 0a3.1 2.3 -26.7 1 0 -6.1 0M950.9 257.8a2.1 2.7 -17 1 0 4.2 0a2.1 2.7 -17 1 0 -4.2 0M951.3 261.3a3.1 2.3 34.5 1 0 6.2 0a3.1 2.3 34.5 1 0 -6.2 0M953.1 264.9a2.6 2.7 10.7 1 0 5.3 0a2.6 2.7 10.7 1 0 -5.3 0M952.8 268.6a2.2 2.1 -17.4 1 0 4.5 0a2.2 2.1 -17.4 1 0 -4.5 0M954.3 272.3a2.1 2.9 -19.7 1 0 4.2 0a2.1 2.9 -19.7 1 0 -4.2 0M954.1 276a2.7 3.3 -35.6 1 0 5.4 0a2.7 3.3 -35.6 1 0 -5.4 0M956.2 279.7a2.4 2.5 21.3 1 0 4.8 0a2.4 2.5 21.3 1 0 -4.8 0M955.4 283.4a2.6 2.2 -38.9 1 0 5.2 0a2.6 2.2 -38.9 1 0 -5.2 0M955.7 287.1a3.2 2.9 12.9 1 0 6.4 0a3.2 2.9 12.9 1 0 -6.4 0M957.9 290.8a2.1 2.7 -41 1 0 4.1 0a2.1 2.7 -41 1 0 -4.1 0M957.9 294.6a3 3 -34.2 1 0 6.1 0a3 3 -34.2 1 0 -6.1 0M959 298.3a2.9 2.6 -42.1 1 0 5.9 0a2.9 2.6 -42.1 1 0 -5.9 0M958.7 302a3.3 2 -10.5 1 0 6.6 0a3.3 2 -10.5 1 0 -6.6 0M961.2 305.7a2.3 2.1 50.9 1 0 4.5 0a2.3 2.1 50.9 1 0 -4.5 0M961.7 309.4a2.5 2.4 -28.6 1 0 4.9 0a2.5 2.4 -28.6 1 0 -4.9 0M962.6 313a2.6 3 -35.5 1 0 5.1 0a2.6 3 -35.5 1 0 -5.1 0M965.3 316.5a2.1 2.8 43.3 1 0 4.2 0a2.1 2.8 43.3 1 0 -4.2 0M965.8 320.1a2.1 2.7 -31.6 1 0 4.2 0a2.1 2.7 -31.6 1 0 -4.2 0M966.8 323.7a2.9 2.7 -21.5 1 0 5.9 0a2.9 2.7 -21.5 1 0 -5.9 0M967.2 327.2a3.3 3.1 -37 1 0 6.6 0a3.3 3.1 -37 1 0 -6.6 0M969.6 330.8a2.7 2.2 20.4 1 0 5.4 0a2.7 2.2 20.4 1 0 -5.4 0M969.7 334.3a2.8 3.4 22.2 1 0 5.6 0a2.8 3.4 22.2 1 0 -5.6 0M971.2 337.9a3.1 2.2 -46 1 0 6.3 0a3.1 2.2 -46 1 0 -6.3 0M972.9 341.5a2.8 3 20.2 1 0 5.6 0a2.8 3 20.2 1 0 -5.6 0" fill="none" stroke="#1a1a1a" stroke-width="0.55" opacity="0.9"/><path d="M870.4 288.2C873.5 290.7 883.6 298.6 889.3 302.7C895.1 306.8 898.2 309.6 904.9 312.7C911.6 315.9 921 319 929.4 321.6C937.8 324.2 950.7 327.2 955 328.3" fill="none" stroke="#4a2612" stroke-width="2" opacity="0.35"/><path d="M870.4 288.2C873.5 290.7 883.6 298.6 889.3 302.7C895.1 306.8 898.2 309.6 904.9 312.7C911.6 315.9 921 319 929.4 321.6C937.8 324.2 950.7 327.2 955 328.3" fill="none" stroke="#2a150a" stroke-width="0.7" opacity="0.8"/><path d="M926.1 290.5C924 292.9 917.3 301.2 913.8 304.9C910.3 308.7 909.7 310 904.9 312.7C900.1 315.5 891.7 318.9 884.9 321.6C878 324.4 867.2 328.1 863.7 329.4" fill="none" stroke="#4a2612" stroke-width="2" opacity="0.35"/><path d="M926.1 290.5C924 292.9 917.3 301.2 913.8 304.9C910.3 308.7 909.7 310 904.9 312.7C900.1 315.5 891.7 318.9 884.9 321.6C878 324.4 867.2 328.1 863.7 329.4" fill="none" stroke="#2a150a" stroke-width="0.7" opacity="0.8"/></g>
</g>
<g id="topbar"><rect x="0" y="0" width="1796" height="88" fill="#1c1c1c"/><circle cx="6.2" cy="43.7" r="31.5" fill="#161616"/><circle cx="122" cy="43.7" r="31.5" fill="#161616"/><circle cx="238" cy="43.7" r="31.5" fill="#161616"/><circle cx="354.2" cy="43.7" r="31.5" fill="#161616"/><g fill="#9c9c9c" stroke="none"><path d="M12.5 39.5L-8 60" stroke="#9c9c9c" stroke-width="7" stroke-linecap="round" fill="none"/><circle cx="12.7" cy="39.3" r="11.3"/><clipPath id="wh"><circle cx="12.7" cy="39.3" r="12"/></clipPath><path d="M10.9 37.9 L16.2 32.6 L30 20 L38 28 L22.8 39.2 L17.5 44.5 A4.6 4.6 0 0 1 10.9 37.9Z" fill="#161616" clip-path="url(#wh)"/></g><path d="M113.3 58.8L134.6 37.3" stroke="#9c9c9c" stroke-width="6.2" stroke-linecap="round" fill="none"/><path d="M124.8 40.8L131 47" stroke="#161616" stroke-width="1.3" fill="none"/><path d="M115.4 27.5Q115.7 35.8 124 36.1Q115.7 36.4 115.4 44.7Q115.1 36.4 106.8 36.1Q115.1 35.8 115.4 27.5Z" fill="#9c9c9c"/><path d="M126.5 26.4Q126.7 30.4 130.7 30.6Q126.7 30.8 126.5 34.8Q126.3 30.8 122.3 30.6Q126.3 30.4 126.5 26.4Z" fill="#9c9c9c"/><g fill="#9c9c9c"><path d="M236.6 28.3H251.5A3 3 0 0 1 251.5 34.3H233.4Q233.4 29 236.6 28.3Z"/><path d="M232 37.4H238.6Q239.5 42 242.6 46Q243.8 50 243 53H236.2Q237.2 49.5 234.6 46Q232 42 232 37.4Z"/><path d="M225.3 53.7H243Q242.5 59 238 59.7H225.3A3 3 0 0 1 225.3 53.7Z"/></g><path d="M369.3 29L340.9 41.9L350.4 45.6L338.4 57.6L340.9 60L353.2 47.9L357 56.3Z" fill="#9c9c9c" stroke="#9c9c9c" stroke-width="0.6" stroke-linejoin="round"/><path d="M1590.2 19Q1589 27 1576 39Q1563 50 1556.4 53.3L1554.6 51.5Q1560 43 1572 31Q1584 20.5 1590.2 19Z" fill="#0a7aff"/><path d="M1554 53.8Q1555.5 60 1550 66Q1544 70 1536.5 68.8Q1533.6 68.3 1534 67.3Q1539 65 1541 60Q1543 55 1547.5 53.8Q1551 52.8 1554 53.8Z" fill="#0a7aff"/><path d="M1714.5 18C1714.5 18 1726 29.4 1726 29.4C1726 29.4 1721 34.7 1721 34.7C1721 34.7 1722.1 41.9 1721.8 44.1C1721.5 46.3 1720.1 51.4 1718.5 53.4C1716.9 55.4 1709.8 60.6 1707.8 61.5C1705.8 62.4 1703.3 59.9 1701 60.8C1698.7 61.7 1690.1 68.5 1687.7 69.5C1685.3 70.5 1681.6 70 1680.4 69.5C1679.2 69 1677.9 66.4 1677.7 65.5C1677.5 64.6 1677.1 63.5 1678.4 61.5C1679.7 59.5 1688.3 50.4 1689 48.1C1689.7 45.8 1684.9 42.8 1684.4 41.4C1683.9 40 1683.7 37.6 1684.4 36C1685.1 34.4 1688.9 29.3 1690.4 28C1691.9 26.7 1694.8 25.2 1697 24.7C1699.2 24.2 1709 24 1709 24C1709 24 1714.5 18 1714.5 18Z" fill="#c9c9c9" stroke="#c9c9c9" stroke-width="1.5" stroke-linejoin="round"/><path d="M1701.3 59.3L1712.3 48.3" stroke="#1c1c1c" stroke-width="1.8" stroke-linecap="round" fill="none"/></g>
</svg></body></html>
